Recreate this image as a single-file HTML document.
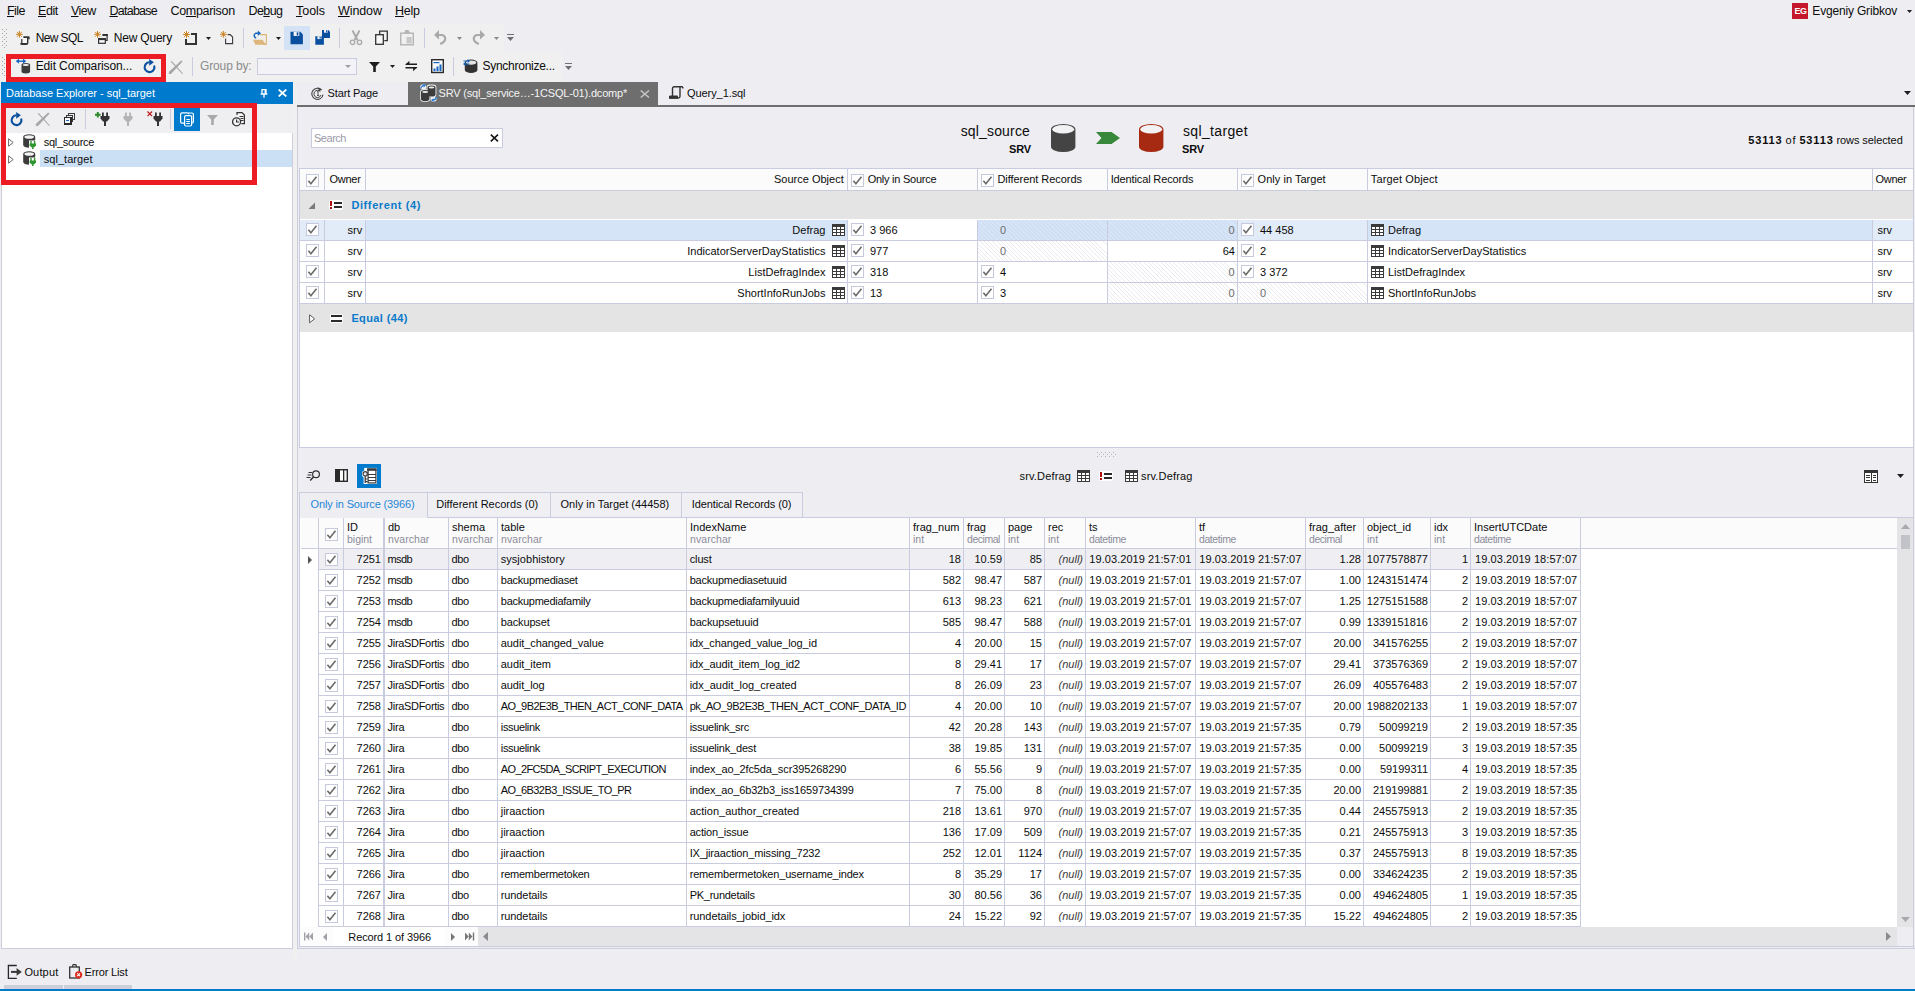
<!DOCTYPE html>
<html lang="en"><head><meta charset="utf-8"><title>dbForge Data Compare</title><style>
html,body{margin:0;padding:0}
body{width:1915px;height:991px;background:#eeeef2;position:relative;overflow:hidden;font-family:"Liberation Sans",sans-serif;font-size:11px;color:#1e1e1e}
body div,body svg{position:absolute}
.t{white-space:pre}
</style></head><body>
<div class="t" style="left:7px;top:4px;font-size:12.5px;line-height:14px;color:#0c0c0c;letter-spacing:-0.539px;"><u>F</u>ile</div>
<div class="t" style="left:38px;top:4px;font-size:12.5px;line-height:14px;color:#0c0c0c;letter-spacing:-0.462px;"><u>E</u>dit</div>
<div class="t" style="left:71px;top:4px;font-size:12.5px;line-height:14px;color:#0c0c0c;letter-spacing:-0.573px;"><u>V</u>iew</div>
<div class="t" style="left:109.5px;top:4px;font-size:12.5px;line-height:14px;color:#0c0c0c;letter-spacing:-0.752px;"><u>D</u>atabase</div>
<div class="t" style="left:170.5px;top:4px;font-size:12.5px;line-height:14px;color:#0c0c0c;letter-spacing:-0.311px;">Co<u>m</u>parison</div>
<div class="t" style="left:248.5px;top:4px;font-size:12.5px;line-height:14px;color:#0c0c0c;letter-spacing:-0.589px;">De<u>b</u>ug</div>
<div class="t" style="left:296px;top:4px;font-size:12.5px;line-height:14px;color:#0c0c0c;letter-spacing:-0.037px;"><u>T</u>ools</div>
<div class="t" style="left:338px;top:4px;font-size:12.5px;line-height:14px;color:#0c0c0c;letter-spacing:-0.097px;"><u>W</u>indow</div>
<div class="t" style="left:395px;top:4px;font-size:12.5px;line-height:14px;color:#0c0c0c;letter-spacing:-0.255px;"><u>H</u>elp</div>
<div style="left:1792px;top:3px;width:16px;height:16px;background:#c4172c;"></div>
<div class="t" style="top:6px;font-size:9px;line-height:10px;color:#fff;font-weight:bold;letter-spacing:-0.508px;left:1794.5px;">EG</div>
<div class="t" style="top:4px;font-size:12px;line-height:14px;color:#0c0c0c;letter-spacing:-0.172px;left:1812.3px;">Evgeniy Gribkov</div>
<svg style="left:1907px;top:10px;" width="5" height="3" viewBox="0 0 5 3"><path d="M0,0 h5 l-2.5,3 z" fill="#1e1e1e"/></svg>
<div style="left:0px;top:24px;width:504px;height:28px;background:#f0f0f0;"></div>
<div style="left:0px;top:52px;width:562px;height:30px;background:#f0f0f0;"></div>
<div style="left:293px;top:82px;width:4px;height:880px;background:#f0f0f0;"></div>
<svg style="left:2px;top:29px;shape-rendering:crispEdges;" width="6" height="20" viewBox="0 0 6 20"><rect x="0" y="0" width="1" height="1" fill="#a4a4ac"/><rect x="2" y="2" width="1" height="1" fill="#a4a4ac"/><rect x="4" y="0" width="1" height="1" fill="#a4a4ac"/><rect x="0" y="4" width="1" height="1" fill="#a4a4ac"/><rect x="2" y="6" width="1" height="1" fill="#a4a4ac"/><rect x="4" y="4" width="1" height="1" fill="#a4a4ac"/><rect x="0" y="8" width="1" height="1" fill="#a4a4ac"/><rect x="2" y="10" width="1" height="1" fill="#a4a4ac"/><rect x="4" y="8" width="1" height="1" fill="#a4a4ac"/><rect x="0" y="12" width="1" height="1" fill="#a4a4ac"/><rect x="2" y="14" width="1" height="1" fill="#a4a4ac"/><rect x="4" y="12" width="1" height="1" fill="#a4a4ac"/><rect x="0" y="16" width="1" height="1" fill="#a4a4ac"/><rect x="2" y="18" width="1" height="1" fill="#a4a4ac"/><rect x="4" y="16" width="1" height="1" fill="#a4a4ac"/></svg>
<svg style="left:15px;top:30px;" width="17" height="16" viewBox="0 0 17 16"><line x1="1.00" y1="4.30" x2="7.80" y2="4.30" stroke="#c8801a" stroke-width="0.95"/><line x1="2.00" y1="1.90" x2="6.80" y2="6.70" stroke="#c8801a" stroke-width="0.95"/><line x1="4.40" y1="0.90" x2="4.40" y2="7.70" stroke="#c8801a" stroke-width="0.95"/><line x1="6.80" y1="1.90" x2="2.00" y2="6.70" stroke="#c8801a" stroke-width="0.95"/><rect x="7.2" y="8" width="5" height="5.4" fill="#f6f6fb"/><path d="M8.4,6.2 h5 a1.3,1.3 0 0 1 1.3,1.3 v1.8 h-1.5 v-1.2 h-4.8 z" fill="#333"/><rect x="12" y="7" width="1.4" height="6.6" fill="#333"/><rect x="6.2" y="9" width="1.2" height="4.3" fill="#333"/><path d="M5.3,13.1 h7.6 v0.6 a1.3,1.3 0 0 1 -1.3,1.3 h-5 a1.3,1.3 0 0 1 -1.3,-1.3 z" fill="#333"/></svg>
<div class="t" style="top:31px;font-size:12px;line-height:14px;color:#0c0c0c;letter-spacing:-0.623px;left:35.7px;">New SQL</div>
<svg style="left:94px;top:30px;" width="16" height="16" viewBox="0 0 16 16"><line x1="0.10" y1="4.30" x2="6.90" y2="4.30" stroke="#c8801a" stroke-width="0.95"/><line x1="1.10" y1="1.90" x2="5.90" y2="6.70" stroke="#c8801a" stroke-width="0.95"/><line x1="3.50" y1="0.90" x2="3.50" y2="7.70" stroke="#c8801a" stroke-width="0.95"/><line x1="5.90" y1="1.90" x2="1.10" y2="6.70" stroke="#c8801a" stroke-width="0.95"/><rect x="8.4" y="4" width="5.3" height="2" fill="#333"/><path d="M13.1,4 v6.4 h-1.6" fill="none" stroke="#333" stroke-width="1.2"/><rect x="4.6" y="8.7" width="6.7" height="4.6" fill="#f6f6fb" stroke="#333" stroke-width="1.2"/><rect x="4" y="8.1" width="7.9" height="2" fill="#333"/></svg>
<div class="t" style="top:31px;font-size:12px;line-height:14px;color:#0c0c0c;letter-spacing:-0.192px;left:113.7px;">New Query</div>
<svg style="left:182px;top:30px;" width="16" height="16" viewBox="0 0 16 16"><rect x="4" y="4" width="10" height="10" fill="none" stroke="#333" stroke-width="2"/><rect x="0" y="0" width="9" height="9" fill="#f0f0f0"/><line x1="1.00" y1="4.50" x2="8.00" y2="4.50" stroke="#c8801a" stroke-width="0.95"/><line x1="2.03" y1="2.03" x2="6.97" y2="6.97" stroke="#c8801a" stroke-width="0.95"/><line x1="4.50" y1="1.00" x2="4.50" y2="8.00" stroke="#c8801a" stroke-width="0.95"/><line x1="6.97" y1="2.03" x2="2.03" y2="6.97" stroke="#c8801a" stroke-width="0.95"/></svg>
<svg style="left:206px;top:37px;" width="5" height="3" viewBox="0 0 5 3"><path d="M0,0 h5 l-2.5,3 z" fill="#1e1e1e"/></svg>
<svg style="left:219px;top:30px;" width="16" height="16" viewBox="0 0 16 16"><path d="M6.6,4.6 h4.6 l2.4,2.4 v6.6 h-7 z" fill="#f4f4f8" stroke="#3a3a3a" stroke-width="1.1"/><rect x="0" y="0" width="8.6" height="8.6" fill="#f0f0f0"/><line x1="1.00" y1="4.30" x2="7.80" y2="4.30" stroke="#c8801a" stroke-width="0.95"/><line x1="2.00" y1="1.90" x2="6.80" y2="6.70" stroke="#c8801a" stroke-width="0.95"/><line x1="4.40" y1="0.90" x2="4.40" y2="7.70" stroke="#c8801a" stroke-width="0.95"/><line x1="6.80" y1="1.90" x2="2.00" y2="6.70" stroke="#c8801a" stroke-width="0.95"/></svg>
<div style="left:243px;top:28px;width:1px;height:20px;background:#c9cbdf;"></div>
<svg style="left:252px;top:30px;" width="16" height="16" viewBox="0 0 16 16"><path d="M8.2,4.6 h6.2 v9.8 h-3" fill="#f1eee8" stroke="#dcb67a" stroke-width="1.1"/><path d="M1,9.8 h9.4 l3.6,5 h-10.6 z" fill="#dcb67a"/><path d="M4.2,8 a2.5,2.5 0 0 1 -0.6,-4.7 h3" fill="none" stroke="#1565c0" stroke-width="1.5"/><path d="M5.8,0.6 l3.2,2.7 l-3.2,2.7 z" fill="#1565c0"/></svg>
<svg style="left:276px;top:37px;" width="5" height="3" viewBox="0 0 5 3"><path d="M0,0 h5 l-2.5,3 z" fill="#1e1e1e"/></svg>
<div style="left:284px;top:26px;width:26px;height:24px;background:#d3e2f4;"></div>
<svg style="left:290px;top:31px;" width="14" height="14" viewBox="0 0 14 14"><path d="M0.5,0.8 h9.816666666666668 l2.5833333333333335,2.5833333333333335 v9.816666666666668 h-12.400000000000002 z" fill="#0b509f"/><rect x="3.6000000000000005" y="0.8" width="5.683333333333334" height="4.133333333333334" fill="#f4f4f8"/><rect x="6.700000000000001" y="1.3166666666666669" width="1.6533333333333335" height="3.1000000000000005" fill="#0b509f"/></svg>
<svg style="left:315px;top:30px;" width="16" height="16" viewBox="0 0 16 16"><path d="M7,0 h6.333333333333333 l1.6666666666666665,1.6666666666666665 v6.333333333333333 h-8.0 z" fill="#0b509f"/><rect x="9.0" y="0" width="3.6666666666666665" height="2.6666666666666665" fill="#f4f4f8"/><rect x="11.0" y="0.3333333333333333" width="1.0666666666666667" height="2.0" fill="#0b509f"/><path d="M0.3,6.2 h6.808333333333334 l1.7916666666666667,1.7916666666666667 v6.808333333333334 h-8.6 z" fill="#0b509f"/><rect x="2.4499999999999997" y="6.2" width="3.941666666666667" height="2.8666666666666667" fill="#f4f4f8"/><rect x="4.6" y="6.558333333333334" width="1.1466666666666667" height="2.15" fill="#0b509f"/></svg>
<div style="left:339px;top:28px;width:1px;height:20px;background:#c9cbdf;"></div>
<svg style="left:349px;top:30px;" width="14" height="16" viewBox="0 0 14 16"><path d="M3.5,0.5 L8.5,10 M10.5,0.5 L5.5,10" stroke="#a9a9a9" stroke-width="1.9" fill="none"/><circle cx="3.5" cy="12.3" r="2.2" fill="none" stroke="#a9a9a9" stroke-width="1.3"/><circle cx="10.5" cy="12.3" r="2.2" fill="none" stroke="#a9a9a9" stroke-width="1.3"/></svg>
<svg style="left:375px;top:30px;" width="14" height="16" viewBox="0 0 14 16"><path d="M4.7,4 v-2.8 h7.6 v9.4 h-3" fill="none" stroke="#333" stroke-width="1.3"/><rect x="0.7" y="4.7" width="7.6" height="9.6" fill="#f8f8f8" stroke="#333" stroke-width="1.3"/></svg>
<svg style="left:400px;top:29px;" width="14" height="17" viewBox="0 0 14 17"><rect x="0.7" y="4.2" width="12.6" height="11.6" fill="none" stroke="#b4b4b4" stroke-width="1.4"/><path d="M4,4 l1.5,-3 h3 l1.5,3 z" fill="#b4b4b4"/><rect x="6.5" y="8" width="5.2" height="6.5" fill="#c8c8c8"/></svg>
<div style="left:424px;top:28px;width:1px;height:20px;background:#c9cbdf;"></div>
<svg style="left:434px;top:30px;" width="13" height="15" viewBox="0 0 13 15"><g ><path d="M1.5,5 h6 a3.7,3.7 0 0 1 3.7,3.7 c0,2.5 -2,4 -5,5.3" fill="none" stroke="#a9a9a9" stroke-width="2.2"/><path d="M0,5 l5,-5 v9.4 z" fill="#a9a9a9"/></g></svg>
<svg style="left:457px;top:37px;" width="5" height="3" viewBox="0 0 5 3"><path d="M0,0 h5 l-2.5,3 z" fill="#8a8a8a"/></svg>
<svg style="left:472px;top:30px;" width="13" height="15" viewBox="0 0 13 15"><g transform="translate(13,0) scale(-1,1)"><path d="M1.5,5 h6 a3.7,3.7 0 0 1 3.7,3.7 c0,2.5 -2,4 -5,5.3" fill="none" stroke="#a9a9a9" stroke-width="2.2"/><path d="M0,5 l5,-5 v9.4 z" fill="#a9a9a9"/></g></svg>
<svg style="left:494px;top:37px;" width="5" height="3" viewBox="0 0 5 3"><path d="M0,0 h5 l-2.5,3 z" fill="#8a8a8a"/></svg>
<svg style="left:507px;top:34px;" width="8" height="8" viewBox="0 0 8 8"><rect x="0" y="0" width="7" height="1" fill="#717171"/><path d="M0,3 h7 l-3.5,4 z" fill="#717171"/></svg>
<svg style="left:2px;top:57px;shape-rendering:crispEdges;" width="6" height="20" viewBox="0 0 6 20"><rect x="0" y="0" width="1" height="1" fill="#a4a4ac"/><rect x="2" y="2" width="1" height="1" fill="#a4a4ac"/><rect x="0" y="4" width="1" height="1" fill="#a4a4ac"/><rect x="2" y="6" width="1" height="1" fill="#a4a4ac"/><rect x="0" y="8" width="1" height="1" fill="#a4a4ac"/><rect x="2" y="10" width="1" height="1" fill="#a4a4ac"/><rect x="0" y="12" width="1" height="1" fill="#a4a4ac"/><rect x="2" y="14" width="1" height="1" fill="#a4a4ac"/><rect x="0" y="16" width="1" height="1" fill="#a4a4ac"/><rect x="2" y="18" width="1" height="1" fill="#a4a4ac"/></svg>
<svg style="left:16px;top:58px;" width="15" height="16" viewBox="0 0 15 16"><path d="M0.5,3.2 h9" stroke="#1565c0" stroke-width="1.4"/><path d="M0,3.2 l3,-2.6 v5.2 z M10,3.2 l-3,-2.6 v5.2 z" fill="#1565c0"/><path d="M5.5,6.8919999999999995 a4.3,1.892 0 0 1 8.6,0 v6.716 a4.3,1.892 0 0 1 -8.6,0 z" fill="#3c3c3c"/><ellipse cx="9.8" cy="6.8919999999999995" rx="3.0999999999999996" ry="0.9919999999999999" fill="#f4f4f4"/></svg>
<div class="t" style="top:59px;font-size:12px;line-height:14px;color:#0c0c0c;letter-spacing:-0.123px;left:35.7px;">Edit Comparison...</div>
<svg style="left:143.3px;top:59px;overflow:visible;" width="15" height="15" viewBox="0 0 15 15"><path d="M11.1,6.5 A4.9,4.9 0 1 1 6.5,3.3" fill="none" stroke="#0b509f" stroke-width="2.1"/><path d="M6.2,-0.1 L10.9,3.3 L6.2,6.7 z" fill="#0b509f"/></svg>
<svg style="left:168px;top:59.5px;" width="16" height="15" viewBox="0 0 16 15"><path d="M13.2,0.6 L14.6,1.6 L3.2,13.8 Q1.6,14.6 0.8,13.4 Q0.4,12.2 1.6,11.2 z" fill="#a6a6a6"/><path d="M2.6,1.6 L3.8,1 L15,13.4 L14.2,14 z" fill="#a6a6a6"/></svg>
<div style="left:192px;top:57px;width:1px;height:19px;background:#c9cbdf;"></div>
<div class="t" style="top:59px;font-size:12px;line-height:14px;color:#8c8c8c;letter-spacing:-0.134px;left:200px;">Group by:</div>
<div style="left:257px;top:58px;width:98px;height:15px;border:1px solid #c9cbdf;background:#f3f3f7;"></div>
<svg style="left:345px;top:65px;" width="6" height="3" viewBox="0 0 6 3"><path d="M0,0 h6 l-3.0,3 z" fill="#a0a0a0"/></svg>
<svg style="left:369px;top:62px;" width="11" height="10" viewBox="0 0 11 10"><path d="M0,0 h11 l-4.2,4.6 v5.4 h-2.6 v-5.4 z" fill="#1e1e1e"/></svg>
<svg style="left:390px;top:65px;" width="5" height="3" viewBox="0 0 5 3"><path d="M0,0 h5 l-2.5,3 z" fill="#1e1e1e"/></svg>
<svg style="left:405px;top:60px;" width="13" height="12" viewBox="0 0 13 12"><path d="M1,4.2 h11 M0.5,7.8 h11" stroke="#1e1e1e" stroke-width="1.5"/><path d="M0,4.9 l4.4,-4.2 v4.2 z M12.5,7.1 l-4.4,4.2 v-4.2 z" fill="#1e1e1e"/></svg>
<svg style="left:430.5px;top:59px;" width="13" height="15" viewBox="0 0 13 15"><rect x="0.7" y="0.7" width="11.6" height="12.8" fill="#fafafa" stroke="#2a2a2a" stroke-width="1.4"/><rect x="2.5" y="3" width="6" height="1.2" fill="#1565c0"/><rect x="2.5" y="9.5" width="2" height="2.7" fill="#1565c0"/><rect x="5.5" y="7.5" width="2" height="4.7" fill="#1565c0"/><rect x="8.5" y="5.5" width="2" height="6.7" fill="#1565c0"/></svg>
<div style="left:453px;top:57px;width:1px;height:19px;background:#c9cbdf;"></div>
<svg style="left:462px;top:58px;" width="16" height="16" viewBox="0 0 16 16"><path d="M2.8,4.6 a6.3,3 0 0 1 12.6,0 v7.4 a6.3,3 0 0 1 -12.6,0 z" fill="#333"/><ellipse cx="9.1" cy="4.6" rx="5.1" ry="2.1" fill="#e4e4e6"/><path d="M1.4,3 h5 M2.4,6 h5" stroke="#1565c0" stroke-width="1.2"/><path d="M5.6,1 l2.4,2 l-2.4,2 z" fill="#1565c0"/><path d="M3.4,4 l-2.4,2 l2.4,2 z" fill="#1565c0"/></svg>
<div class="t" style="top:59px;font-size:12px;line-height:14px;color:#0c0c0c;letter-spacing:-0.268px;left:482.5px;">Synchronize...</div>
<svg style="left:565px;top:63px;" width="8" height="8" viewBox="0 0 8 8"><rect x="0" y="0" width="7" height="1" fill="#717171"/><path d="M0,3 h7 l-3.5,4 z" fill="#717171"/></svg>
<div style="left:6px;top:54px;width:150px;height:18px;border:5px solid #ed1c24;background:transparent;"></div>
<div style="left:1px;top:104px;width:292px;height:845px;background:#fff;"></div>
<div style="left:1px;top:104px;width:290px;height:843px;border:1px solid #cccedb;background:transparent;"></div>
<div style="left:1px;top:104px;width:292px;height:29px;background:#efeff2;"></div>
<div style="left:1px;top:82px;width:292px;height:22px;background:#007acc;"></div>
<div class="t" style="top:87px;font-size:11px;line-height:12px;color:#fff;letter-spacing:-0.006px;left:6px;">Database Explorer - sql_target</div>
<svg style="left:260px;top:89px;" width="8" height="9" viewBox="0 0 8 9"><path d="M2,0.5 h4 v4.5 h-4 z M0.5,5.2 h7 M4,5.2 v3.6" fill="none" stroke="#fff" stroke-width="1.3"/><rect x="4.6" y="0.5" width="1.6" height="4.5" fill="#fff"/></svg>
<svg style="left:278px;top:89px;" width="9" height="8" viewBox="0 0 9 8"><path d="M0.7,0.5 L8.3,7.5 M8.3,0.5 L0.7,7.5" stroke="#fff" stroke-width="1.7" fill="none"/></svg>
<svg style="left:10.3px;top:112px;overflow:visible;" width="15" height="15" viewBox="0 0 15 15"><path d="M11.1,6.5 A4.9,4.9 0 1 1 6.5,3.3" fill="none" stroke="#0b509f" stroke-width="2.1"/><path d="M6.2,-0.1 L10.9,3.3 L6.2,6.7 z" fill="#0b509f"/></svg>
<svg style="left:35px;top:112px;" width="16" height="15" viewBox="0 0 16 15"><path d="M13.2,0.6 L14.6,1.6 L3.2,13.8 Q1.6,14.6 0.8,13.4 Q0.4,12.2 1.6,11.2 z" fill="#a6a6a6"/><path d="M2.6,1.6 L3.8,1 L15,13.4 L14.2,14 z" fill="#a6a6a6"/></svg>
<svg style="left:63px;top:112px;shape-rendering:crispEdges;" width="13" height="13" viewBox="0 0 13 13"><path d="M5.5,3.5 v-2 h6 v6 h-2" fill="none" stroke="#3a3a3a" stroke-width="1"/><path d="M3.5,5.5 v-2 h6 v6 h-2" fill="none" stroke="#3a3a3a" stroke-width="1"/><rect x="1.1" y="5.1" width="6.8" height="6.8" fill="#f8f8fb" stroke="#2a2a2a" stroke-width="1.2"/><rect x="2.8" y="7.8" width="3.4" height="1.4" fill="#1565c0"/></svg>
<div style="left:85px;top:109px;width:1px;height:20px;background:#c9cbdf;"></div>
<svg style="left:94px;top:111px;" width="16" height="15" viewBox="0 0 16 15"><path d="M3.8,1 v5.6 M1,3.8 h5.6" stroke="#2a8a2a" stroke-width="1.9"/><rect x="8.0" y="1.5" width="1.8" height="4" fill="#333"/><rect x="12.2" y="1.5" width="1.8" height="4" fill="#333"/><path d="M6.5,5.0 h9 v2.5 l-2.5,3 h-4 l-2.5,-3 z" fill="#333"/><rect x="10.0" y="10.0" width="2" height="5" fill="#333"/></svg>
<svg style="left:122px;top:111px;" width="12" height="15" viewBox="0 0 12 15"><rect x="3.0" y="1.5" width="1.8" height="4" fill="#b4b4b4"/><rect x="7.2" y="1.5" width="1.8" height="4" fill="#b4b4b4"/><path d="M1.5,5.0 h9 v2.5 l-2.5,3 h-4 l-2.5,-3 z" fill="#b4b4b4"/><rect x="5.0" y="10.0" width="2" height="5" fill="#b4b4b4"/></svg>
<svg style="left:147px;top:111px;" width="16" height="15" viewBox="0 0 16 15"><path d="M0.5,0.5 l4.6,4.6 M5.1,0.5 l-4.6,4.6" stroke="#c01818" stroke-width="1.2"/><rect x="8.0" y="1.5" width="1.8" height="4" fill="#333"/><rect x="12.2" y="1.5" width="1.8" height="4" fill="#333"/><path d="M6.5,5.0 h9 v2.5 l-2.5,3 h-4 l-2.5,-3 z" fill="#333"/><rect x="10.0" y="10.0" width="2" height="5" fill="#333"/></svg>
<div style="left:170px;top:109px;width:1px;height:20px;background:#c9cbdf;"></div>
<div style="left:174px;top:108px;width:26px;height:23px;background:#007acc;"></div>
<svg style="left:180px;top:112px;" width="15" height="15" viewBox="0 0 15 15"><path d="M4.2,11.2 h-2.2 a1.4,1.4 0 0 1 -1.4,-1.4 v-7.6 a1.4,1.4 0 0 1 1.4,-1.4 h5.4 a1.4,1.4 0 0 1 1.4,1.4" fill="none" stroke="#fff" stroke-width="1.2"/><path d="M8.8,1 h3 a1.6,1.6 0 0 1 1.6,1.6 v7 a1.4,1.4 0 0 1 -1.4,1.4" fill="none" stroke="#fff" stroke-width="1.2"/><rect x="4.6" y="3.6" width="7" height="10.4" rx="1.2" fill="#007acc" stroke="#fff" stroke-width="1.2"/><path d="M6.3,7.5 h3.6 M6.3,9.5 h3.6 M6.3,11.5 h3.6" stroke="#fff" stroke-width="1"/></svg>
<svg style="left:207px;top:114.5px;" width="11" height="10" viewBox="0 0 11 10"><path d="M0,0 h11 l-4.2,4.6 v5.4 h-2.6 v-5.4 z" fill="#a9a9a9"/></svg>
<svg style="left:232px;top:112px;" width="15" height="15" viewBox="0 0 15 15"><path d="M5,3 v-2.4 h5 l2.4,2.4 v8.6 h-3" fill="#f8f8f8" stroke="#333" stroke-width="1.2"/><path d="M7.5,4.5 h4 M8.5,6.5 h3 M9,8.5 h2.5" stroke="#333" stroke-width="1"/><circle cx="4.6" cy="9.8" r="4" fill="#f4f4f8" stroke="#333" stroke-width="1.3"/><path d="M4.6,7.4 v2.6 h2.4" fill="none" stroke="#333" stroke-width="1.2"/></svg>
<div style="left:40px;top:150px;width:252px;height:17px;background:#cce0f5;"></div>
<svg style="left:8px;top:138px;" width="6" height="9" viewBox="0 0 6 9"><path d="M0.6,0.8 L5.2,4.5 L0.6,8.2 z" fill="#fff" stroke="#6a6a6a" stroke-width="1"/></svg>
<svg style="left:22px;top:134px;" width="15" height="15" viewBox="0 0 15 15"><path d="M1.2,3.0 a6.0,2.7 0 0 1 12,0 v8.0 a6.0,2.7 0 0 1 -12,0 z" fill="#3c3c3c"/><ellipse cx="7.2" cy="3.0" rx="4.8" ry="1.8000000000000003" fill="#f4f4f4"/><rect x="7" y="6.5" width="8" height="8.5" fill="#fff"/><path d="M9,7 v3 M12.6,7 v3" stroke="#2f962f" stroke-width="1.4"/><path d="M7.6,9.4 h6.4 v1.8 l-1.6,2 h-3.2 l-1.6,-2 z" fill="#2f962f"/><rect x="10.1" y="12.8" width="1.5" height="2.2" fill="#2f962f"/></svg>
<div class="t" style="top:136px;font-size:11px;line-height:12px;color:#0c0c0c;letter-spacing:-0.280px;left:43.7px;">sql_source</div>
<svg style="left:8px;top:155px;" width="6" height="9" viewBox="0 0 6 9"><path d="M0.6,0.8 L5.2,4.5 L0.6,8.2 z" fill="#fff" stroke="#6a6a6a" stroke-width="1"/></svg>
<svg style="left:22px;top:151px;" width="15" height="15" viewBox="0 0 15 15"><path d="M1.2,3.0 a6.0,2.7 0 0 1 12,0 v8.0 a6.0,2.7 0 0 1 -12,0 z" fill="#3c3c3c"/><ellipse cx="7.2" cy="3.0" rx="4.8" ry="1.8000000000000003" fill="#f4f4f4"/><rect x="7" y="6.5" width="8" height="8.5" fill="#fff"/><path d="M9,7 v3 M12.6,7 v3" stroke="#2f962f" stroke-width="1.4"/><path d="M7.6,9.4 h6.4 v1.8 l-1.6,2 h-3.2 l-1.6,-2 z" fill="#2f962f"/><rect x="10.1" y="12.8" width="1.5" height="2.2" fill="#2f962f"/></svg>
<div class="t" style="top:153px;font-size:11px;line-height:12px;color:#0c0c0c;letter-spacing:0.049px;left:43.7px;">sql_target</div>
<div style="left:1px;top:103px;width:246px;height:72px;border:5px solid #ed1c24;background:transparent;"></div>
<div style="left:297px;top:105px;width:1618px;height:2px;background:#6e6e6e;"></div>
<div style="left:408px;top:82px;width:250px;height:24px;background:#6e6e6e;"></div>
<svg style="left:311px;top:87px;" width="13" height="13" viewBox="0 0 13 13"><path d="M10.6,3 A5.6,5.6 0 1 0 12,7.6" fill="none" stroke="#444" stroke-width="1.1"/><path d="M9.3,4.6 A3.6,3.6 0 1 0 10,8" fill="none" stroke="#444" stroke-width="1"/><path d="M7.6,0.4 l3.4,2.4 l-3.6,1.6 z" fill="#444"/><path d="M6,5 l1,-0.6 v4 M6,8.5 h2.2" fill="none" stroke="#444" stroke-width="0.9"/></svg>
<div class="t" style="top:87px;font-size:11px;line-height:12px;color:#0c0c0c;letter-spacing:-0.158px;left:327.6px;">Start Page</div>
<svg style="left:420px;top:84px;" width="17" height="18" viewBox="0 0 17 18"><rect x="6.6" y="0.6" width="9.8" height="12.6" rx="3.2" fill="#f0f0f0"/><rect x="0.2" y="5.2" width="10" height="12.6" rx="3.2" fill="#f0f0f0"/><rect x="0.3" y="0.5" width="6" height="5" rx="2" fill="#f0f0f0"/><rect x="10.5" y="12.6" width="6" height="5" rx="2" fill="#f0f0f0"/><path d="M7.5,3.5 a4.0,2 0 0 1 8,0 v7 a4.0,2 0 0 1 -8,0 z" fill="#3c3c3c"/><ellipse cx="11.5" cy="3.5" rx="2.8" ry="1.1" fill="#f0f0f0"/><path d="M1,8 a4.2,2 0 0 1 8.4,0 v7 a4.2,2 0 0 1 -8.4,0 z" fill="#3c3c3c"/><ellipse cx="5.2" cy="8" rx="3.0" ry="1.1" fill="#f0f0f0"/><path d="M1,4.5 a3,3 0 0 1 3,-3" fill="none" stroke="#2a7bd6" stroke-width="1.3"/><path d="M3.6,-0.2 l2.4,1.8 l-2.4,1.8 z" fill="#2a7bd6"/><path d="M16,13 a3,3 0 0 1 -3,3" fill="none" stroke="#2a7bd6" stroke-width="1.3"/><path d="M13.4,14.2 l-2.4,1.8 l2.4,1.8 z" fill="#2a7bd6"/></svg>
<div class="t" style="top:87px;font-size:11px;line-height:12px;color:#f4f4f4;letter-spacing:-0.186px;left:438.6px;">SRV (sql_service…-1CSQL-01).dcomp*</div>
<svg style="left:640px;top:90px;" width="10" height="8" viewBox="0 0 10 8"><path d="M0.7,0.5 L9,7.5 M9,0.5 L0.7,7.5" stroke="#c4c4c4" stroke-width="1.5" fill="none"/></svg>
<svg style="left:669px;top:86px;" width="15" height="13" viewBox="0 0 15 13"><path d="M3.5,10 v-7.5 a1.8,1.8 0 0 1 1.8,-1.8 h8.5 M13.8,2.6 v-1.6 M11,0.8 v9.5 a1.8,1.8 0 0 1 -1.8,1.8 h-8.8 M0.6,10.3 h8" fill="none" stroke="#333" stroke-width="1.4"/><rect x="0" y="10" width="9" height="2.6" fill="#333"/></svg>
<div class="t" style="top:87px;font-size:11px;line-height:12px;color:#0c0c0c;letter-spacing:-0.074px;left:687px;">Query_1.sql</div>
<svg style="left:1904px;top:91px;" width="7" height="4" viewBox="0 0 7 4"><path d="M0,0 h7 l-3.5,4 z" fill="#1e1e1e"/></svg>
<div style="left:297px;top:107px;width:1px;height:842px;background:#cccedb;"></div>
<div style="left:297px;top:948px;width:1618px;height:1px;background:#cccedb;"></div>
<div style="left:1913px;top:107px;width:1px;height:842px;background:#cccedb;"></div>
<svg style="left:7px;top:964px;" width="16" height="16" viewBox="0 0 16 16"><path d="M9.8,1.5 H1.4 V14.4 H9.8" fill="none" stroke="#2a2a2a" stroke-width="1.3"/><path d="M4,7.9 h8" stroke="#3a3a3a" stroke-width="2"/><path d="M9.6,4 l5.2,3.9 l-5.2,3.9 z" fill="#3a3a3a"/></svg>
<div class="t" style="top:966px;font-size:11px;line-height:12px;color:#0c0c0c;letter-spacing:0.161px;left:24.4px;">Output</div>
<svg style="left:69px;top:964px;" width="14" height="15" viewBox="0 0 14 15"><rect x="0.7" y="3" width="9.6" height="11" fill="none" stroke="#333" stroke-width="1.3"/><path d="M3.2,3 l1,-2.4 h2.6 l1,2.4" fill="none" stroke="#333" stroke-width="1.2"/><circle cx="9.6" cy="10.8" r="3.6" fill="#e0281c"/><path d="M8.2,9.4 l2.8,2.8 M11,9.4 l-2.8,2.8" stroke="#fff" stroke-width="1.1"/></svg>
<div class="t" style="top:966px;font-size:11px;line-height:12px;color:#0c0c0c;letter-spacing:-0.163px;left:84.6px;">Error List</div>
<div style="left:4px;top:985px;width:59px;height:4px;background:#ccced9;"></div>
<div style="left:64px;top:985px;width:68px;height:4px;background:#ccced9;"></div>
<div style="left:0px;top:989px;width:1915px;height:2px;background:#007acc;"></div>
<div style="left:311px;top:128px;width:190px;height:18px;border:1px solid #c9cbdf;background:#fff;"></div>
<div class="t" style="top:132px;font-size:11px;line-height:12px;color:#9a9aa8;letter-spacing:-0.477px;left:314px;">Search</div>
<svg style="left:490px;top:134px;" width="9" height="8" viewBox="0 0 9 8"><path d="M0.8,0.6 L8,7.4 M8,0.6 L0.8,7.4" stroke="#111" stroke-width="1.5" fill="none"/></svg>
<div class="t" style="top:123px;font-size:14px;line-height:16px;color:#0c0c0c;letter-spacing:0.160px;left:960.7px;">sql_source</div>
<div class="t" style="top:143px;font-size:11px;line-height:12px;color:#0c0c0c;font-weight:bold;letter-spacing:-0.141px;left:1009px;">SRV</div>
<svg style="left:1051px;top:124px;" width="25" height="28" viewBox="0 0 25 28"><path d="M0,5.2 a12.2,5.2 0 0 1 24.4,0 v17.6 a12.2,5.2 0 0 1 -24.4,0 z" fill="#444"/><ellipse cx="12.2" cy="5.2" rx="11.0" ry="4.3" fill="#f2f2f4"/></svg>
<svg style="left:1096px;top:132px;" width="24" height="12" viewBox="0 0 24 12"><path d="M0,0 h15.5 l8.5,6 l-8.5,6 h-15.5 l5.5,-6 z" fill="#37883a"/></svg>
<svg style="left:1139px;top:124px;" width="25" height="28" viewBox="0 0 25 28"><path d="M0,5.2 a12.2,5.2 0 0 1 24.4,0 v17.6 a12.2,5.2 0 0 1 -24.4,0 z" fill="#a62a12"/><ellipse cx="12.2" cy="5.2" rx="11.0" ry="4.3" fill="#f2f2f4"/></svg>
<div class="t" style="top:123px;font-size:14px;line-height:16px;color:#0c0c0c;letter-spacing:0.352px;left:1183px;">sql_target</div>
<div class="t" style="top:143px;font-size:11px;line-height:12px;color:#0c0c0c;font-weight:bold;letter-spacing:-0.141px;left:1182px;">SRV</div>
<div class="t" style="top:134px;font-size:11px;line-height:12px;color:#0c0c0c;font-weight:bold;letter-spacing:0.843px;left:1748.3px;">53113</div>
<div class="t" style="top:134px;font-size:11px;line-height:12px;color:#0c0c0c;letter-spacing:0.706px;left:1785.6px;">of</div>
<div class="t" style="top:134px;font-size:11px;line-height:12px;color:#0c0c0c;font-weight:bold;letter-spacing:0.843px;left:1799.4px;">53113</div>
<div class="t" style="top:134px;font-size:11px;line-height:12px;color:#0c0c0c;letter-spacing:-0.074px;left:1836.4px;">rows selected</div>
<div style="left:299px;top:168px;width:1614px;height:280px;background:#fff;"></div>
<div style="left:299px;top:168px;width:1613px;height:278px;border:1px solid #c9cbdf;background:transparent;"></div>
<div style="left:300px;top:169px;width:1613px;height:21px;background:#fbfbfc;"></div>
<div style="left:299px;top:190px;width:1614px;height:1px;background:#c9cbdf;"></div>
<div style="left:324px;top:169px;width:1px;height:21px;background:#c9cbdf;"></div>
<div style="left:365px;top:169px;width:1px;height:21px;background:#c9cbdf;"></div>
<div style="left:847px;top:169px;width:1px;height:21px;background:#c9cbdf;"></div>
<div style="left:977px;top:169px;width:1px;height:21px;background:#c9cbdf;"></div>
<div style="left:1107px;top:169px;width:1px;height:21px;background:#c9cbdf;"></div>
<div style="left:1237px;top:169px;width:1px;height:21px;background:#c9cbdf;"></div>
<div style="left:1367px;top:169px;width:1px;height:21px;background:#c9cbdf;"></div>
<div style="left:1872px;top:169px;width:1px;height:21px;background:#c9cbdf;"></div>
<div style="left:306px;top:174px;width:11px;height:11px;border:1px solid #c6c9dc;background:#fff;"></div>
<svg style="left:306px;top:174px;" width="13" height="13" viewBox="0 0 13 13"><path d="M2.4,6.7 L4.9,9.7 L10.5,2.7" fill="none" stroke="#6a6a6a" stroke-width="1.6"/></svg>
<div class="t" style="top:173px;font-size:11px;line-height:12px;color:#0c0c0c;letter-spacing:-0.281px;left:329.6px;">Owner</div>
<div class="t" style="top:173px;font-size:11px;line-height:12px;color:#0c0c0c;left:243.70000000000005px;width:600px;text-align:right;">Source Object</div>
<div style="left:851px;top:174px;width:11px;height:11px;border:1px solid #c6c9dc;background:#fff;"></div>
<svg style="left:851px;top:174px;" width="13" height="13" viewBox="0 0 13 13"><path d="M2.4,6.7 L4.9,9.7 L10.5,2.7" fill="none" stroke="#6a6a6a" stroke-width="1.6"/></svg>
<div class="t" style="top:173px;font-size:11px;line-height:12px;color:#0c0c0c;letter-spacing:-0.254px;left:867.7px;">Only in Source</div>
<div style="left:981px;top:174px;width:11px;height:11px;border:1px solid #c6c9dc;background:#fff;"></div>
<svg style="left:981px;top:174px;" width="13" height="13" viewBox="0 0 13 13"><path d="M2.4,6.7 L4.9,9.7 L10.5,2.7" fill="none" stroke="#6a6a6a" stroke-width="1.6"/></svg>
<div class="t" style="top:173px;font-size:11px;line-height:12px;color:#0c0c0c;letter-spacing:-0.047px;left:997.4px;">Different Records</div>
<div class="t" style="top:173px;font-size:11px;line-height:12px;color:#0c0c0c;letter-spacing:-0.135px;left:1110.7px;">Identical Records</div>
<div style="left:1241px;top:174px;width:11px;height:11px;border:1px solid #c6c9dc;background:#fff;"></div>
<svg style="left:1241px;top:174px;" width="13" height="13" viewBox="0 0 13 13"><path d="M2.4,6.7 L4.9,9.7 L10.5,2.7" fill="none" stroke="#6a6a6a" stroke-width="1.6"/></svg>
<div class="t" style="top:173px;font-size:11px;line-height:12px;color:#0c0c0c;letter-spacing:0.031px;left:1257.6px;">Only in Target</div>
<div class="t" style="top:173px;font-size:11px;line-height:12px;color:#0c0c0c;letter-spacing:0.114px;left:1370.8px;">Target Object</div>
<div class="t" style="top:173px;font-size:11px;line-height:12px;color:#0c0c0c;letter-spacing:-0.281px;left:1875.5px;">Owner</div>
<div style="left:300px;top:191px;width:1613px;height:28px;background:#e4e4e4;"></div>
<div style="left:300px;top:304px;width:1613px;height:28px;background:#e4e4e4;"></div>
<svg style="left:308px;top:202px;" width="8" height="8" viewBox="0 0 8 8"><path d="M7,0.5 v6.5 h-6.5 z" fill="#7a7a7a"/></svg>
<div style="left:329px;top:200px;width:14px;height:10px;background:rgba(255,255,255,0.85);border-radius:2px;"></div>
<svg style="left:330px;top:201px;shape-rendering:crispEdges;" width="12" height="8" viewBox="0 0 12 8"><rect x="0" y="0" width="2" height="5" fill="#b01010"/><rect x="0" y="6" width="2" height="2" fill="#b01010"/><rect x="4" y="1" width="8" height="2" fill="#2a2a2a"/><rect x="4" y="5" width="8" height="2" fill="#2a2a2a"/></svg>
<div class="t" style="top:199px;font-size:11px;line-height:12px;color:#0a7acb;font-weight:bold;letter-spacing:0.605px;left:351.4px;">Different (4)</div>
<svg style="left:309px;top:314px;" width="7" height="10" viewBox="0 0 7 10"><path d="M0.6,0.8 L5.6,4.8 L0.6,8.8 z" fill="#fff" stroke="#5a5a5a" stroke-width="1"/></svg>
<div style="left:329.5px;top:313.5px;width:13px;height:9px;background:rgba(255,255,255,0.85);border-radius:2px;"></div>
<svg style="left:330.5px;top:315px;shape-rendering:crispEdges;" width="11" height="7" viewBox="0 0 11 7"><rect x="0" y="0" width="11" height="2" fill="#2a2a2a"/><rect x="0" y="4.5" width="11" height="2" fill="#2a2a2a"/></svg>
<div class="t" style="top:312px;font-size:11px;line-height:12px;color:#0a7acb;font-weight:bold;letter-spacing:0.382px;left:351.4px;">Equal (44)</div>
<div style="left:300px;top:220px;width:1613px;height:20px;background:#e2ebf8;"></div>
<div style="left:366px;top:220px;width:481px;height:20px;background:#d6e4f7;"></div>
<div style="left:1368px;top:220px;width:504px;height:20px;background:#d6e4f7;"></div>
<div style="left:848px;top:220px;width:129px;height:20px;background:#fff;"></div>
<div style="left:300px;top:240px;width:1613px;height:1px;background:#c9cbdf;"></div>
<div style="left:306px;top:223px;width:11px;height:11px;border:1px solid #c6c9dc;background:#fff;"></div>
<svg style="left:306px;top:223px;" width="13" height="13" viewBox="0 0 13 13"><path d="M2.4,6.7 L4.9,9.7 L10.5,2.7" fill="none" stroke="#6a6a6a" stroke-width="1.6"/></svg>
<div class="t" style="top:224px;font-size:11px;line-height:12px;color:#0c0c0c;letter-spacing:-0.024px;left:-237.89999999999998px;width:600px;text-align:right;">srv</div>
<div class="t" style="top:224px;font-size:11px;line-height:12px;color:#0c0c0c;left:225.39999999999998px;width:600px;text-align:right;">Defrag</div>
<svg style="left:832px;top:224px;shape-rendering:crispEdges;" width="13" height="12" viewBox="0 0 13 12"><rect x="0" y="0" width="13" height="12" fill="#3a3a3a"/><rect x="1" y="3" width="3" height="2" fill="#fff"/><rect x="5" y="3" width="3" height="2" fill="#fff"/><rect x="9" y="3" width="3" height="2" fill="#fff"/><rect x="1" y="6" width="3" height="2" fill="#fff"/><rect x="5" y="6" width="3" height="2" fill="#fff"/><rect x="9" y="6" width="3" height="2" fill="#fff"/><rect x="1" y="9" width="3" height="2" fill="#fff"/><rect x="5" y="9" width="3" height="2" fill="#fff"/><rect x="9" y="9" width="3" height="2" fill="#fff"/></svg>
<div style="left:851px;top:223px;width:11px;height:11px;border:1px solid #c6c9dc;background:#fff;"></div>
<svg style="left:851px;top:223px;" width="13" height="13" viewBox="0 0 13 13"><path d="M2.4,6.7 L4.9,9.7 L10.5,2.7" fill="none" stroke="#6a6a6a" stroke-width="1.6"/></svg>
<div class="t" style="top:224px;font-size:11px;line-height:12px;color:#0c0c0c;left:870px;">3 966</div>
<div style="left:978px;top:220px;width:129px;height:20px;background:#d6e4f7;background-image:repeating-linear-gradient(45deg,#ccdaef 0,#ccdaef 0.7px,transparent 0.7px,transparent 3px);"></div>
<div class="t" style="top:224px;font-size:11px;line-height:12px;color:#6e6e6e;left:1000px;">0</div>
<div style="left:1108px;top:220px;width:129px;height:20px;background:#d6e4f7;background-image:repeating-linear-gradient(45deg,#ccdaef 0,#ccdaef 0.7px,transparent 0.7px,transparent 3px);"></div>
<div class="t" style="top:224px;font-size:11px;line-height:12px;color:#6e6e6e;left:634.5px;width:600px;text-align:right;">0</div>
<div style="left:1241px;top:223px;width:11px;height:11px;border:1px solid #c6c9dc;background:#fff;"></div>
<svg style="left:1241px;top:223px;" width="13" height="13" viewBox="0 0 13 13"><path d="M2.4,6.7 L4.9,9.7 L10.5,2.7" fill="none" stroke="#6a6a6a" stroke-width="1.6"/></svg>
<div class="t" style="top:224px;font-size:11px;line-height:12px;color:#0c0c0c;left:1260px;">44 458</div>
<svg style="left:1371px;top:224px;shape-rendering:crispEdges;" width="13" height="12" viewBox="0 0 13 12"><rect x="0" y="0" width="13" height="12" fill="#3a3a3a"/><rect x="1" y="3" width="3" height="2" fill="#fff"/><rect x="5" y="3" width="3" height="2" fill="#fff"/><rect x="9" y="3" width="3" height="2" fill="#fff"/><rect x="1" y="6" width="3" height="2" fill="#fff"/><rect x="5" y="6" width="3" height="2" fill="#fff"/><rect x="9" y="6" width="3" height="2" fill="#fff"/><rect x="1" y="9" width="3" height="2" fill="#fff"/><rect x="5" y="9" width="3" height="2" fill="#fff"/><rect x="9" y="9" width="3" height="2" fill="#fff"/></svg>
<div class="t" style="top:224px;font-size:11px;line-height:12px;color:#0c0c0c;left:1388px;">Defrag</div>
<div class="t" style="top:224px;font-size:11px;line-height:12px;color:#0c0c0c;letter-spacing:-0.024px;left:1877.5px;">srv</div>
<div style="left:324px;top:220px;width:1px;height:21px;background:#c9cbdf;"></div>
<div style="left:365px;top:220px;width:1px;height:21px;background:#c9cbdf;"></div>
<div style="left:847px;top:220px;width:1px;height:21px;background:#c9cbdf;"></div>
<div style="left:977px;top:220px;width:1px;height:21px;background:#c9cbdf;"></div>
<div style="left:1107px;top:220px;width:1px;height:21px;background:#c9cbdf;"></div>
<div style="left:1237px;top:220px;width:1px;height:21px;background:#c9cbdf;"></div>
<div style="left:1367px;top:220px;width:1px;height:21px;background:#c9cbdf;"></div>
<div style="left:1872px;top:220px;width:1px;height:21px;background:#c9cbdf;"></div>
<div style="left:300px;top:261px;width:1613px;height:1px;background:#c9cbdf;"></div>
<div style="left:306px;top:244px;width:11px;height:11px;border:1px solid #c6c9dc;background:#fff;"></div>
<svg style="left:306px;top:244px;" width="13" height="13" viewBox="0 0 13 13"><path d="M2.4,6.7 L4.9,9.7 L10.5,2.7" fill="none" stroke="#6a6a6a" stroke-width="1.6"/></svg>
<div class="t" style="top:245px;font-size:11px;line-height:12px;color:#0c0c0c;letter-spacing:-0.024px;left:-237.89999999999998px;width:600px;text-align:right;">srv</div>
<div class="t" style="top:245px;font-size:11px;line-height:12px;color:#0c0c0c;left:225.39999999999998px;width:600px;text-align:right;">IndicatorServerDayStatistics</div>
<svg style="left:832px;top:245px;shape-rendering:crispEdges;" width="13" height="12" viewBox="0 0 13 12"><rect x="0" y="0" width="13" height="12" fill="#3a3a3a"/><rect x="1" y="3" width="3" height="2" fill="#fff"/><rect x="5" y="3" width="3" height="2" fill="#fff"/><rect x="9" y="3" width="3" height="2" fill="#fff"/><rect x="1" y="6" width="3" height="2" fill="#fff"/><rect x="5" y="6" width="3" height="2" fill="#fff"/><rect x="9" y="6" width="3" height="2" fill="#fff"/><rect x="1" y="9" width="3" height="2" fill="#fff"/><rect x="5" y="9" width="3" height="2" fill="#fff"/><rect x="9" y="9" width="3" height="2" fill="#fff"/></svg>
<div style="left:851px;top:244px;width:11px;height:11px;border:1px solid #c6c9dc;background:#fff;"></div>
<svg style="left:851px;top:244px;" width="13" height="13" viewBox="0 0 13 13"><path d="M2.4,6.7 L4.9,9.7 L10.5,2.7" fill="none" stroke="#6a6a6a" stroke-width="1.6"/></svg>
<div class="t" style="top:245px;font-size:11px;line-height:12px;color:#0c0c0c;left:870px;">977</div>
<div style="left:978px;top:241px;width:129px;height:20px;background:#fff;background-image:repeating-linear-gradient(45deg,#ebebef 0,#ebebef 0.7px,transparent 0.7px,transparent 3px);"></div>
<div class="t" style="top:245px;font-size:11px;line-height:12px;color:#6e6e6e;left:1000px;">0</div>
<div class="t" style="top:245px;font-size:11px;line-height:12px;color:#0c0c0c;left:635px;width:600px;text-align:right;">64</div>
<div style="left:1241px;top:244px;width:11px;height:11px;border:1px solid #c6c9dc;background:#fff;"></div>
<svg style="left:1241px;top:244px;" width="13" height="13" viewBox="0 0 13 13"><path d="M2.4,6.7 L4.9,9.7 L10.5,2.7" fill="none" stroke="#6a6a6a" stroke-width="1.6"/></svg>
<div class="t" style="top:245px;font-size:11px;line-height:12px;color:#0c0c0c;left:1260px;">2</div>
<svg style="left:1371px;top:245px;shape-rendering:crispEdges;" width="13" height="12" viewBox="0 0 13 12"><rect x="0" y="0" width="13" height="12" fill="#3a3a3a"/><rect x="1" y="3" width="3" height="2" fill="#fff"/><rect x="5" y="3" width="3" height="2" fill="#fff"/><rect x="9" y="3" width="3" height="2" fill="#fff"/><rect x="1" y="6" width="3" height="2" fill="#fff"/><rect x="5" y="6" width="3" height="2" fill="#fff"/><rect x="9" y="6" width="3" height="2" fill="#fff"/><rect x="1" y="9" width="3" height="2" fill="#fff"/><rect x="5" y="9" width="3" height="2" fill="#fff"/><rect x="9" y="9" width="3" height="2" fill="#fff"/></svg>
<div class="t" style="top:245px;font-size:11px;line-height:12px;color:#0c0c0c;left:1388px;">IndicatorServerDayStatistics</div>
<div class="t" style="top:245px;font-size:11px;line-height:12px;color:#0c0c0c;letter-spacing:-0.024px;left:1877.5px;">srv</div>
<div style="left:324px;top:241px;width:1px;height:21px;background:#c9cbdf;"></div>
<div style="left:365px;top:241px;width:1px;height:21px;background:#c9cbdf;"></div>
<div style="left:847px;top:241px;width:1px;height:21px;background:#c9cbdf;"></div>
<div style="left:977px;top:241px;width:1px;height:21px;background:#c9cbdf;"></div>
<div style="left:1107px;top:241px;width:1px;height:21px;background:#c9cbdf;"></div>
<div style="left:1237px;top:241px;width:1px;height:21px;background:#c9cbdf;"></div>
<div style="left:1367px;top:241px;width:1px;height:21px;background:#c9cbdf;"></div>
<div style="left:1872px;top:241px;width:1px;height:21px;background:#c9cbdf;"></div>
<div style="left:300px;top:282px;width:1613px;height:1px;background:#c9cbdf;"></div>
<div style="left:306px;top:265px;width:11px;height:11px;border:1px solid #c6c9dc;background:#fff;"></div>
<svg style="left:306px;top:265px;" width="13" height="13" viewBox="0 0 13 13"><path d="M2.4,6.7 L4.9,9.7 L10.5,2.7" fill="none" stroke="#6a6a6a" stroke-width="1.6"/></svg>
<div class="t" style="top:266px;font-size:11px;line-height:12px;color:#0c0c0c;letter-spacing:-0.024px;left:-237.89999999999998px;width:600px;text-align:right;">srv</div>
<div class="t" style="top:266px;font-size:11px;line-height:12px;color:#0c0c0c;left:225.39999999999998px;width:600px;text-align:right;">ListDefragIndex</div>
<svg style="left:832px;top:266px;shape-rendering:crispEdges;" width="13" height="12" viewBox="0 0 13 12"><rect x="0" y="0" width="13" height="12" fill="#3a3a3a"/><rect x="1" y="3" width="3" height="2" fill="#fff"/><rect x="5" y="3" width="3" height="2" fill="#fff"/><rect x="9" y="3" width="3" height="2" fill="#fff"/><rect x="1" y="6" width="3" height="2" fill="#fff"/><rect x="5" y="6" width="3" height="2" fill="#fff"/><rect x="9" y="6" width="3" height="2" fill="#fff"/><rect x="1" y="9" width="3" height="2" fill="#fff"/><rect x="5" y="9" width="3" height="2" fill="#fff"/><rect x="9" y="9" width="3" height="2" fill="#fff"/></svg>
<div style="left:851px;top:265px;width:11px;height:11px;border:1px solid #c6c9dc;background:#fff;"></div>
<svg style="left:851px;top:265px;" width="13" height="13" viewBox="0 0 13 13"><path d="M2.4,6.7 L4.9,9.7 L10.5,2.7" fill="none" stroke="#6a6a6a" stroke-width="1.6"/></svg>
<div class="t" style="top:266px;font-size:11px;line-height:12px;color:#0c0c0c;left:870px;">318</div>
<div style="left:981px;top:265px;width:11px;height:11px;border:1px solid #c6c9dc;background:#fff;"></div>
<svg style="left:981px;top:265px;" width="13" height="13" viewBox="0 0 13 13"><path d="M2.4,6.7 L4.9,9.7 L10.5,2.7" fill="none" stroke="#6a6a6a" stroke-width="1.6"/></svg>
<div class="t" style="top:266px;font-size:11px;line-height:12px;color:#0c0c0c;left:1000px;">4</div>
<div style="left:1108px;top:262px;width:129px;height:20px;background:#fff;background-image:repeating-linear-gradient(45deg,#ebebef 0,#ebebef 0.7px,transparent 0.7px,transparent 3px);"></div>
<div class="t" style="top:266px;font-size:11px;line-height:12px;color:#6e6e6e;left:634.5px;width:600px;text-align:right;">0</div>
<div style="left:1241px;top:265px;width:11px;height:11px;border:1px solid #c6c9dc;background:#fff;"></div>
<svg style="left:1241px;top:265px;" width="13" height="13" viewBox="0 0 13 13"><path d="M2.4,6.7 L4.9,9.7 L10.5,2.7" fill="none" stroke="#6a6a6a" stroke-width="1.6"/></svg>
<div class="t" style="top:266px;font-size:11px;line-height:12px;color:#0c0c0c;left:1260px;">3 372</div>
<svg style="left:1371px;top:266px;shape-rendering:crispEdges;" width="13" height="12" viewBox="0 0 13 12"><rect x="0" y="0" width="13" height="12" fill="#3a3a3a"/><rect x="1" y="3" width="3" height="2" fill="#fff"/><rect x="5" y="3" width="3" height="2" fill="#fff"/><rect x="9" y="3" width="3" height="2" fill="#fff"/><rect x="1" y="6" width="3" height="2" fill="#fff"/><rect x="5" y="6" width="3" height="2" fill="#fff"/><rect x="9" y="6" width="3" height="2" fill="#fff"/><rect x="1" y="9" width="3" height="2" fill="#fff"/><rect x="5" y="9" width="3" height="2" fill="#fff"/><rect x="9" y="9" width="3" height="2" fill="#fff"/></svg>
<div class="t" style="top:266px;font-size:11px;line-height:12px;color:#0c0c0c;left:1388px;">ListDefragIndex</div>
<div class="t" style="top:266px;font-size:11px;line-height:12px;color:#0c0c0c;letter-spacing:-0.024px;left:1877.5px;">srv</div>
<div style="left:324px;top:262px;width:1px;height:21px;background:#c9cbdf;"></div>
<div style="left:365px;top:262px;width:1px;height:21px;background:#c9cbdf;"></div>
<div style="left:847px;top:262px;width:1px;height:21px;background:#c9cbdf;"></div>
<div style="left:977px;top:262px;width:1px;height:21px;background:#c9cbdf;"></div>
<div style="left:1107px;top:262px;width:1px;height:21px;background:#c9cbdf;"></div>
<div style="left:1237px;top:262px;width:1px;height:21px;background:#c9cbdf;"></div>
<div style="left:1367px;top:262px;width:1px;height:21px;background:#c9cbdf;"></div>
<div style="left:1872px;top:262px;width:1px;height:21px;background:#c9cbdf;"></div>
<div style="left:300px;top:303px;width:1613px;height:1px;background:#c9cbdf;"></div>
<div style="left:306px;top:286px;width:11px;height:11px;border:1px solid #c6c9dc;background:#fff;"></div>
<svg style="left:306px;top:286px;" width="13" height="13" viewBox="0 0 13 13"><path d="M2.4,6.7 L4.9,9.7 L10.5,2.7" fill="none" stroke="#6a6a6a" stroke-width="1.6"/></svg>
<div class="t" style="top:287px;font-size:11px;line-height:12px;color:#0c0c0c;letter-spacing:-0.024px;left:-237.89999999999998px;width:600px;text-align:right;">srv</div>
<div class="t" style="top:287px;font-size:11px;line-height:12px;color:#0c0c0c;left:225.39999999999998px;width:600px;text-align:right;">ShortInfoRunJobs</div>
<svg style="left:832px;top:287px;shape-rendering:crispEdges;" width="13" height="12" viewBox="0 0 13 12"><rect x="0" y="0" width="13" height="12" fill="#3a3a3a"/><rect x="1" y="3" width="3" height="2" fill="#fff"/><rect x="5" y="3" width="3" height="2" fill="#fff"/><rect x="9" y="3" width="3" height="2" fill="#fff"/><rect x="1" y="6" width="3" height="2" fill="#fff"/><rect x="5" y="6" width="3" height="2" fill="#fff"/><rect x="9" y="6" width="3" height="2" fill="#fff"/><rect x="1" y="9" width="3" height="2" fill="#fff"/><rect x="5" y="9" width="3" height="2" fill="#fff"/><rect x="9" y="9" width="3" height="2" fill="#fff"/></svg>
<div style="left:851px;top:286px;width:11px;height:11px;border:1px solid #c6c9dc;background:#fff;"></div>
<svg style="left:851px;top:286px;" width="13" height="13" viewBox="0 0 13 13"><path d="M2.4,6.7 L4.9,9.7 L10.5,2.7" fill="none" stroke="#6a6a6a" stroke-width="1.6"/></svg>
<div class="t" style="top:287px;font-size:11px;line-height:12px;color:#0c0c0c;left:870px;">13</div>
<div style="left:981px;top:286px;width:11px;height:11px;border:1px solid #c6c9dc;background:#fff;"></div>
<svg style="left:981px;top:286px;" width="13" height="13" viewBox="0 0 13 13"><path d="M2.4,6.7 L4.9,9.7 L10.5,2.7" fill="none" stroke="#6a6a6a" stroke-width="1.6"/></svg>
<div class="t" style="top:287px;font-size:11px;line-height:12px;color:#0c0c0c;left:1000px;">3</div>
<div style="left:1108px;top:283px;width:129px;height:20px;background:#fff;background-image:repeating-linear-gradient(45deg,#ebebef 0,#ebebef 0.7px,transparent 0.7px,transparent 3px);"></div>
<div class="t" style="top:287px;font-size:11px;line-height:12px;color:#6e6e6e;left:634.5px;width:600px;text-align:right;">0</div>
<div style="left:1238px;top:283px;width:129px;height:20px;background:#fff;background-image:repeating-linear-gradient(45deg,#ebebef 0,#ebebef 0.7px,transparent 0.7px,transparent 3px);"></div>
<div class="t" style="top:287px;font-size:11px;line-height:12px;color:#6e6e6e;left:1260px;">0</div>
<svg style="left:1371px;top:287px;shape-rendering:crispEdges;" width="13" height="12" viewBox="0 0 13 12"><rect x="0" y="0" width="13" height="12" fill="#3a3a3a"/><rect x="1" y="3" width="3" height="2" fill="#fff"/><rect x="5" y="3" width="3" height="2" fill="#fff"/><rect x="9" y="3" width="3" height="2" fill="#fff"/><rect x="1" y="6" width="3" height="2" fill="#fff"/><rect x="5" y="6" width="3" height="2" fill="#fff"/><rect x="9" y="6" width="3" height="2" fill="#fff"/><rect x="1" y="9" width="3" height="2" fill="#fff"/><rect x="5" y="9" width="3" height="2" fill="#fff"/><rect x="9" y="9" width="3" height="2" fill="#fff"/></svg>
<div class="t" style="top:287px;font-size:11px;line-height:12px;color:#0c0c0c;left:1388px;">ShortInfoRunJobs</div>
<div class="t" style="top:287px;font-size:11px;line-height:12px;color:#0c0c0c;letter-spacing:-0.024px;left:1877.5px;">srv</div>
<div style="left:324px;top:283px;width:1px;height:21px;background:#c9cbdf;"></div>
<div style="left:365px;top:283px;width:1px;height:21px;background:#c9cbdf;"></div>
<div style="left:847px;top:283px;width:1px;height:21px;background:#c9cbdf;"></div>
<div style="left:977px;top:283px;width:1px;height:21px;background:#c9cbdf;"></div>
<div style="left:1107px;top:283px;width:1px;height:21px;background:#c9cbdf;"></div>
<div style="left:1237px;top:283px;width:1px;height:21px;background:#c9cbdf;"></div>
<div style="left:1367px;top:283px;width:1px;height:21px;background:#c9cbdf;"></div>
<div style="left:1872px;top:283px;width:1px;height:21px;background:#c9cbdf;"></div>
<svg style="left:1097px;top:452px;shape-rendering:crispEdges;" width="20" height="5" viewBox="0 0 20 5"><rect x="0" y="0" width="1" height="1" fill="#b4b4bc"/><rect x="2" y="2" width="1" height="1" fill="#b4b4bc"/><rect x="0" y="4" width="1" height="1" fill="#b4b4bc"/><rect x="4" y="0" width="1" height="1" fill="#b4b4bc"/><rect x="6" y="2" width="1" height="1" fill="#b4b4bc"/><rect x="4" y="4" width="1" height="1" fill="#b4b4bc"/><rect x="8" y="0" width="1" height="1" fill="#b4b4bc"/><rect x="10" y="2" width="1" height="1" fill="#b4b4bc"/><rect x="8" y="4" width="1" height="1" fill="#b4b4bc"/><rect x="12" y="0" width="1" height="1" fill="#b4b4bc"/><rect x="14" y="2" width="1" height="1" fill="#b4b4bc"/><rect x="12" y="4" width="1" height="1" fill="#b4b4bc"/><rect x="16" y="0" width="1" height="1" fill="#b4b4bc"/><rect x="18" y="2" width="1" height="1" fill="#b4b4bc"/><rect x="16" y="4" width="1" height="1" fill="#b4b4bc"/></svg>
<svg style="left:306px;top:470px;" width="15" height="12" viewBox="0 0 15 12"><circle cx="10" cy="4.2" r="3.4" fill="none" stroke="#333" stroke-width="1.2"/><path d="M7.6,6.8 L4.2,10.6" stroke="#333" stroke-width="1.5"/><path d="M2.5,2.5 h3.5 M1.5,5 h4 M0.5,7.5 h4" stroke="#333" stroke-width="1"/></svg>
<svg style="left:335px;top:469px;" width="13" height="13" viewBox="0 0 13 13"><rect x="0.7" y="0.7" width="11.6" height="11.6" fill="#fafafa" stroke="#2a2a2a" stroke-width="1.4"/><rect x="0" y="0" width="5" height="13" fill="#2a2a2a"/><rect x="8" y="0" width="1.3" height="13" fill="#2a2a2a"/></svg>
<div style="left:357px;top:464px;width:24px;height:24px;background:#007acc;"></div>
<svg style="left:362px;top:467px;" width="16" height="18" viewBox="0 0 16 18"><rect x="2.2" y="0.9" width="12.8" height="16" fill="#fff"/><rect x="0" y="3.6" width="6" height="7" rx="3" fill="#fff"/><rect x="1.6" y="9" width="5" height="8" fill="#fff"/><rect x="6.1" y="2.1" width="7.8" height="13.8" fill="#fff" stroke="#3a3a3a" stroke-width="1.2"/><rect x="5" y="1.4" width="9.6" height="2.4" fill="#3a3a3a"/><path d="M6,7.5 h8 M6,10.5 h8 M6,13.5 h8" stroke="#3a3a3a" stroke-width="1"/><circle cx="3.2" cy="6.8" r="2.2" fill="#e8e8e8" stroke="#3a3a3a" stroke-width="1.2"/><path d="M3.2,9 v7 M3.2,12 h2.4 M3.2,14.6 h2.4" fill="none" stroke="#3a3a3a" stroke-width="1.2"/></svg>
<div class="t" style="top:470px;font-size:11px;line-height:12px;color:#0c0c0c;letter-spacing:0.158px;left:1019.5px;">srv.Defrag</div>
<svg style="left:1077px;top:470px;shape-rendering:crispEdges;" width="13" height="12" viewBox="0 0 13 12"><rect x="0" y="0" width="13" height="12" fill="#3a3a3a"/><rect x="1" y="3" width="3" height="2" fill="#fff"/><rect x="5" y="3" width="3" height="2" fill="#fff"/><rect x="9" y="3" width="3" height="2" fill="#fff"/><rect x="1" y="6" width="3" height="2" fill="#fff"/><rect x="5" y="6" width="3" height="2" fill="#fff"/><rect x="9" y="6" width="3" height="2" fill="#fff"/><rect x="1" y="9" width="3" height="2" fill="#fff"/><rect x="5" y="9" width="3" height="2" fill="#fff"/><rect x="9" y="9" width="3" height="2" fill="#fff"/></svg>
<div style="left:1099px;top:471px;width:14px;height:10px;background:rgba(255,255,255,0.85);border-radius:2px;"></div>
<svg style="left:1100px;top:472px;shape-rendering:crispEdges;" width="12" height="8" viewBox="0 0 12 8"><rect x="0" y="0" width="2" height="5" fill="#b01010"/><rect x="0" y="6" width="2" height="2" fill="#b01010"/><rect x="4" y="1" width="8" height="2" fill="#2a2a2a"/><rect x="4" y="5" width="8" height="2" fill="#2a2a2a"/></svg>
<svg style="left:1125px;top:470px;shape-rendering:crispEdges;" width="13" height="12" viewBox="0 0 13 12"><rect x="0" y="0" width="13" height="12" fill="#3a3a3a"/><rect x="1" y="3" width="3" height="2" fill="#fff"/><rect x="5" y="3" width="3" height="2" fill="#fff"/><rect x="9" y="3" width="3" height="2" fill="#fff"/><rect x="1" y="6" width="3" height="2" fill="#fff"/><rect x="5" y="6" width="3" height="2" fill="#fff"/><rect x="9" y="6" width="3" height="2" fill="#fff"/><rect x="1" y="9" width="3" height="2" fill="#fff"/><rect x="5" y="9" width="3" height="2" fill="#fff"/><rect x="9" y="9" width="3" height="2" fill="#fff"/></svg>
<div class="t" style="top:470px;font-size:11px;line-height:12px;color:#0c0c0c;letter-spacing:0.158px;left:1141px;">srv.Defrag</div>
<svg style="left:1864px;top:470px;shape-rendering:crispEdges;" width="14" height="13" viewBox="0 0 14 13"><rect x="0" y="0" width="14" height="13" fill="#333"/><rect x="1" y="3" width="5.5" height="9" fill="#fff"/><rect x="7.5" y="3" width="5.5" height="9" fill="#fff"/><path d="M2,5 h3.5 M2,7.5 h3.5 M2,10 h3.5 M8.5,5 h3.5 M8.5,7.5 h3.5 M8.5,10 h3.5" stroke="#333" stroke-width="1"/></svg>
<svg style="left:1897px;top:474px;" width="7" height="4" viewBox="0 0 7 4"><path d="M0,0 h7 l-3.5,4 z" fill="#1e1e1e"/></svg>
<div style="left:299px;top:492px;width:127px;height:25px;border:1px solid #c9cbdf;background:#eeeef2;border-bottom:none;height:26px;"></div>
<div class="t" style="top:498px;font-size:11px;line-height:12px;color:#1e86d8;letter-spacing:-0.152px;left:310.6px;">Only in Source (3966)</div>
<div style="left:427px;top:492px;width:122px;height:24px;border:1px solid #c9cbdf;background:#f0f0f4;"></div>
<div class="t" style="top:498px;font-size:11px;line-height:12px;color:#0c0c0c;letter-spacing:0.005px;left:436.2px;">Different Records (0)</div>
<div style="left:550px;top:492px;width:130px;height:24px;border:1px solid #c9cbdf;background:#f0f0f4;"></div>
<div class="t" style="top:498px;font-size:11px;line-height:12px;color:#0c0c0c;letter-spacing:0.007px;left:560.5px;">Only in Target (44458)</div>
<div style="left:681px;top:492px;width:120px;height:24px;border:1px solid #c9cbdf;background:#f0f0f4;"></div>
<div class="t" style="top:498px;font-size:11px;line-height:12px;color:#0c0c0c;letter-spacing:-0.086px;left:691.7px;">Identical Records (0)</div>
<div style="left:299px;top:518px;width:1614px;height:409px;background:#fff;"></div>
<div style="left:427px;top:517px;width:1486px;height:1px;background:#c9cbdf;"></div>
<div style="left:299px;top:518px;width:1px;height:429px;background:#c9cbdf;"></div>
<div style="left:301px;top:518px;width:1596px;height:30px;background:#fbfbfc;"></div>
<div style="left:301px;top:548px;width:1596px;height:1px;background:#c9cbdf;"></div>
<div class="t" style="top:521px;font-size:11px;line-height:12px;color:#0c0c0c;left:347px;">ID</div>
<div class="t" style="top:533px;font-size:10.5px;line-height:12px;color:#8c8c9a;letter-spacing:-0.018px;left:347px;">bigint</div>
<div class="t" style="top:521px;font-size:11px;line-height:12px;color:#0c0c0c;left:388px;">db</div>
<div class="t" style="top:533px;font-size:10.5px;line-height:12px;color:#8c8c9a;letter-spacing:0.068px;left:388px;">nvarchar</div>
<div class="t" style="top:521px;font-size:11px;line-height:12px;color:#0c0c0c;left:452px;">shema</div>
<div class="t" style="top:533px;font-size:10.5px;line-height:12px;color:#8c8c9a;letter-spacing:0.068px;left:452px;">nvarchar</div>
<div class="t" style="top:521px;font-size:11px;line-height:12px;color:#0c0c0c;left:501px;">table</div>
<div class="t" style="top:533px;font-size:10.5px;line-height:12px;color:#8c8c9a;letter-spacing:0.068px;left:501px;">nvarchar</div>
<div class="t" style="top:521px;font-size:11px;line-height:12px;color:#0c0c0c;left:690px;">IndexName</div>
<div class="t" style="top:533px;font-size:10.5px;line-height:12px;color:#8c8c9a;letter-spacing:0.068px;left:690px;">nvarchar</div>
<div class="t" style="top:521px;font-size:11px;line-height:12px;color:#0c0c0c;left:913px;">frag_num</div>
<div class="t" style="top:533px;font-size:10.5px;line-height:12px;color:#8c8c9a;left:913px;">int</div>
<div class="t" style="top:521px;font-size:11px;line-height:12px;color:#0c0c0c;left:967px;">frag</div>
<div class="t" style="top:533px;font-size:10.5px;line-height:12px;color:#8c8c9a;letter-spacing:-0.455px;left:967px;">decimal</div>
<div class="t" style="top:521px;font-size:11px;line-height:12px;color:#0c0c0c;left:1008px;">page</div>
<div class="t" style="top:533px;font-size:10.5px;line-height:12px;color:#8c8c9a;left:1008px;">int</div>
<div class="t" style="top:521px;font-size:11px;line-height:12px;color:#0c0c0c;left:1048px;">rec</div>
<div class="t" style="top:533px;font-size:10.5px;line-height:12px;color:#8c8c9a;left:1048px;">int</div>
<div class="t" style="top:521px;font-size:11px;line-height:12px;color:#0c0c0c;left:1089px;">ts</div>
<div class="t" style="top:533px;font-size:10.5px;line-height:12px;color:#8c8c9a;letter-spacing:-0.410px;left:1089px;">datetime</div>
<div class="t" style="top:521px;font-size:11px;line-height:12px;color:#0c0c0c;left:1199px;">tf</div>
<div class="t" style="top:533px;font-size:10.5px;line-height:12px;color:#8c8c9a;letter-spacing:-0.410px;left:1199px;">datetime</div>
<div class="t" style="top:521px;font-size:11px;line-height:12px;color:#0c0c0c;left:1309px;">frag_after</div>
<div class="t" style="top:533px;font-size:10.5px;line-height:12px;color:#8c8c9a;letter-spacing:-0.455px;left:1309px;">decimal</div>
<div class="t" style="top:521px;font-size:11px;line-height:12px;color:#0c0c0c;left:1367px;">object_id</div>
<div class="t" style="top:533px;font-size:10.5px;line-height:12px;color:#8c8c9a;left:1367px;">int</div>
<div class="t" style="top:521px;font-size:11px;line-height:12px;color:#0c0c0c;left:1434px;">idx</div>
<div class="t" style="top:533px;font-size:10.5px;line-height:12px;color:#8c8c9a;left:1434px;">int</div>
<div class="t" style="top:521px;font-size:11px;line-height:12px;color:#0c0c0c;left:1474px;">InsertUTCDate</div>
<div class="t" style="top:533px;font-size:10.5px;line-height:12px;color:#8c8c9a;letter-spacing:-0.410px;left:1474px;">datetime</div>
<div style="left:325px;top:528px;width:11px;height:11px;border:1px solid #c6c9dc;background:#fff;"></div>
<svg style="left:325px;top:528px;" width="13" height="13" viewBox="0 0 13 13"><path d="M2.4,6.7 L4.9,9.7 L10.5,2.7" fill="none" stroke="#6a6a6a" stroke-width="1.6"/></svg>
<div style="left:319px;top:549px;width:1261px;height:20px;background:#efeff3;"></div>
<div style="left:319px;top:569px;width:1262px;height:1px;background:#c9cbdf;"></div>
<div style="left:325px;top:553px;width:11px;height:11px;border:1px solid #c6c9dc;background:#fff;"></div>
<svg style="left:325px;top:553px;" width="13" height="13" viewBox="0 0 13 13"><path d="M2.4,6.7 L4.9,9.7 L10.5,2.7" fill="none" stroke="#6a6a6a" stroke-width="1.6"/></svg>
<div class="t" style="top:553px;font-size:11px;line-height:12px;color:#0c0c0c;left:-219px;width:600px;text-align:right;">7251</div>
<div class="t" style="top:553px;font-size:11px;line-height:12px;color:#0c0c0c;letter-spacing:-0.652px;left:387.6px;">msdb</div>
<div class="t" style="top:553px;font-size:11px;line-height:12px;color:#0c0c0c;letter-spacing:-0.353px;left:451.6px;">dbo</div>
<div class="t" style="top:553px;font-size:11px;line-height:12px;color:#0c0c0c;letter-spacing:0.025px;left:500.8px;">sysjobhistory</div>
<div class="t" style="top:553px;font-size:11px;line-height:12px;color:#0c0c0c;letter-spacing:-0.125px;left:689.7px;">clust</div>
<div class="t" style="top:553px;font-size:11px;line-height:12px;color:#0c0c0c;left:361px;width:600px;text-align:right;">18</div>
<div class="t" style="top:553px;font-size:11px;line-height:12px;color:#0c0c0c;left:402px;width:600px;text-align:right;">10.59</div>
<div class="t" style="top:553px;font-size:11px;line-height:12px;color:#0c0c0c;left:442px;width:600px;text-align:right;">85</div>
<div class="t" style="top:553px;font-size:11px;line-height:12px;color:#3a3a3a;font-style:italic;left:483px;width:600px;text-align:right;">(null)</div>
<div class="t" style="top:553px;font-size:11px;line-height:12px;color:#0c0c0c;letter-spacing:0.061px;left:1089.3px;">19.03.2019 21:57:01</div>
<div class="t" style="top:553px;font-size:11px;line-height:12px;color:#0c0c0c;letter-spacing:0.061px;left:1199.3px;">19.03.2019 21:57:07</div>
<div class="t" style="top:553px;font-size:11px;line-height:12px;color:#0c0c0c;left:761px;width:600px;text-align:right;">1.28</div>
<div class="t" style="top:553px;font-size:11px;line-height:12px;color:#0c0c0c;left:828px;width:600px;text-align:right;">1077578877</div>
<div class="t" style="top:553px;font-size:11px;line-height:12px;color:#0c0c0c;left:868px;width:600px;text-align:right;">1</div>
<div class="t" style="top:553px;font-size:11px;line-height:12px;color:#0c0c0c;letter-spacing:0.072px;left:1475px;">19.03.2019 18:57:07</div>
<div style="left:319px;top:590px;width:1262px;height:1px;background:#c9cbdf;"></div>
<div style="left:325px;top:574px;width:11px;height:11px;border:1px solid #c6c9dc;background:#fff;"></div>
<svg style="left:325px;top:574px;" width="13" height="13" viewBox="0 0 13 13"><path d="M2.4,6.7 L4.9,9.7 L10.5,2.7" fill="none" stroke="#6a6a6a" stroke-width="1.6"/></svg>
<div class="t" style="top:574px;font-size:11px;line-height:12px;color:#0c0c0c;left:-219px;width:600px;text-align:right;">7252</div>
<div class="t" style="top:574px;font-size:11px;line-height:12px;color:#0c0c0c;letter-spacing:-0.652px;left:387.6px;">msdb</div>
<div class="t" style="top:574px;font-size:11px;line-height:12px;color:#0c0c0c;letter-spacing:-0.353px;left:451.6px;">dbo</div>
<div class="t" style="top:574px;font-size:11px;line-height:12px;color:#0c0c0c;letter-spacing:-0.229px;left:500.8px;">backupmediaset</div>
<div class="t" style="top:574px;font-size:11px;line-height:12px;color:#0c0c0c;letter-spacing:-0.223px;left:689.7px;">backupmediasetuuid</div>
<div class="t" style="top:574px;font-size:11px;line-height:12px;color:#0c0c0c;left:361px;width:600px;text-align:right;">582</div>
<div class="t" style="top:574px;font-size:11px;line-height:12px;color:#0c0c0c;left:402px;width:600px;text-align:right;">98.47</div>
<div class="t" style="top:574px;font-size:11px;line-height:12px;color:#0c0c0c;left:442px;width:600px;text-align:right;">587</div>
<div class="t" style="top:574px;font-size:11px;line-height:12px;color:#3a3a3a;font-style:italic;left:483px;width:600px;text-align:right;">(null)</div>
<div class="t" style="top:574px;font-size:11px;line-height:12px;color:#0c0c0c;letter-spacing:0.061px;left:1089.3px;">19.03.2019 21:57:01</div>
<div class="t" style="top:574px;font-size:11px;line-height:12px;color:#0c0c0c;letter-spacing:0.061px;left:1199.3px;">19.03.2019 21:57:07</div>
<div class="t" style="top:574px;font-size:11px;line-height:12px;color:#0c0c0c;left:761px;width:600px;text-align:right;">1.00</div>
<div class="t" style="top:574px;font-size:11px;line-height:12px;color:#0c0c0c;left:828px;width:600px;text-align:right;">1243151474</div>
<div class="t" style="top:574px;font-size:11px;line-height:12px;color:#0c0c0c;left:868px;width:600px;text-align:right;">2</div>
<div class="t" style="top:574px;font-size:11px;line-height:12px;color:#0c0c0c;letter-spacing:0.072px;left:1475px;">19.03.2019 18:57:07</div>
<div style="left:319px;top:611px;width:1262px;height:1px;background:#c9cbdf;"></div>
<div style="left:325px;top:595px;width:11px;height:11px;border:1px solid #c6c9dc;background:#fff;"></div>
<svg style="left:325px;top:595px;" width="13" height="13" viewBox="0 0 13 13"><path d="M2.4,6.7 L4.9,9.7 L10.5,2.7" fill="none" stroke="#6a6a6a" stroke-width="1.6"/></svg>
<div class="t" style="top:595px;font-size:11px;line-height:12px;color:#0c0c0c;left:-219px;width:600px;text-align:right;">7253</div>
<div class="t" style="top:595px;font-size:11px;line-height:12px;color:#0c0c0c;letter-spacing:-0.652px;left:387.6px;">msdb</div>
<div class="t" style="top:595px;font-size:11px;line-height:12px;color:#0c0c0c;letter-spacing:-0.353px;left:451.6px;">dbo</div>
<div class="t" style="top:595px;font-size:11px;line-height:12px;color:#0c0c0c;letter-spacing:-0.268px;left:500.8px;">backupmediafamily</div>
<div class="t" style="top:595px;font-size:11px;line-height:12px;color:#0c0c0c;letter-spacing:-0.255px;left:689.7px;">backupmediafamilyuuid</div>
<div class="t" style="top:595px;font-size:11px;line-height:12px;color:#0c0c0c;left:361px;width:600px;text-align:right;">613</div>
<div class="t" style="top:595px;font-size:11px;line-height:12px;color:#0c0c0c;left:402px;width:600px;text-align:right;">98.23</div>
<div class="t" style="top:595px;font-size:11px;line-height:12px;color:#0c0c0c;left:442px;width:600px;text-align:right;">621</div>
<div class="t" style="top:595px;font-size:11px;line-height:12px;color:#3a3a3a;font-style:italic;left:483px;width:600px;text-align:right;">(null)</div>
<div class="t" style="top:595px;font-size:11px;line-height:12px;color:#0c0c0c;letter-spacing:0.061px;left:1089.3px;">19.03.2019 21:57:01</div>
<div class="t" style="top:595px;font-size:11px;line-height:12px;color:#0c0c0c;letter-spacing:0.061px;left:1199.3px;">19.03.2019 21:57:07</div>
<div class="t" style="top:595px;font-size:11px;line-height:12px;color:#0c0c0c;left:761px;width:600px;text-align:right;">1.25</div>
<div class="t" style="top:595px;font-size:11px;line-height:12px;color:#0c0c0c;left:828px;width:600px;text-align:right;">1275151588</div>
<div class="t" style="top:595px;font-size:11px;line-height:12px;color:#0c0c0c;left:868px;width:600px;text-align:right;">2</div>
<div class="t" style="top:595px;font-size:11px;line-height:12px;color:#0c0c0c;letter-spacing:0.072px;left:1475px;">19.03.2019 18:57:07</div>
<div style="left:319px;top:632px;width:1262px;height:1px;background:#c9cbdf;"></div>
<div style="left:325px;top:616px;width:11px;height:11px;border:1px solid #c6c9dc;background:#fff;"></div>
<svg style="left:325px;top:616px;" width="13" height="13" viewBox="0 0 13 13"><path d="M2.4,6.7 L4.9,9.7 L10.5,2.7" fill="none" stroke="#6a6a6a" stroke-width="1.6"/></svg>
<div class="t" style="top:616px;font-size:11px;line-height:12px;color:#0c0c0c;left:-219px;width:600px;text-align:right;">7254</div>
<div class="t" style="top:616px;font-size:11px;line-height:12px;color:#0c0c0c;letter-spacing:-0.652px;left:387.6px;">msdb</div>
<div class="t" style="top:616px;font-size:11px;line-height:12px;color:#0c0c0c;letter-spacing:-0.353px;left:451.6px;">dbo</div>
<div class="t" style="top:616px;font-size:11px;line-height:12px;color:#0c0c0c;letter-spacing:-0.151px;left:500.8px;">backupset</div>
<div class="t" style="top:616px;font-size:11px;line-height:12px;color:#0c0c0c;letter-spacing:-0.166px;left:689.7px;">backupsetuuid</div>
<div class="t" style="top:616px;font-size:11px;line-height:12px;color:#0c0c0c;left:361px;width:600px;text-align:right;">585</div>
<div class="t" style="top:616px;font-size:11px;line-height:12px;color:#0c0c0c;left:402px;width:600px;text-align:right;">98.47</div>
<div class="t" style="top:616px;font-size:11px;line-height:12px;color:#0c0c0c;left:442px;width:600px;text-align:right;">588</div>
<div class="t" style="top:616px;font-size:11px;line-height:12px;color:#3a3a3a;font-style:italic;left:483px;width:600px;text-align:right;">(null)</div>
<div class="t" style="top:616px;font-size:11px;line-height:12px;color:#0c0c0c;letter-spacing:0.061px;left:1089.3px;">19.03.2019 21:57:01</div>
<div class="t" style="top:616px;font-size:11px;line-height:12px;color:#0c0c0c;letter-spacing:0.061px;left:1199.3px;">19.03.2019 21:57:07</div>
<div class="t" style="top:616px;font-size:11px;line-height:12px;color:#0c0c0c;left:761px;width:600px;text-align:right;">0.99</div>
<div class="t" style="top:616px;font-size:11px;line-height:12px;color:#0c0c0c;left:828px;width:600px;text-align:right;">1339151816</div>
<div class="t" style="top:616px;font-size:11px;line-height:12px;color:#0c0c0c;left:868px;width:600px;text-align:right;">2</div>
<div class="t" style="top:616px;font-size:11px;line-height:12px;color:#0c0c0c;letter-spacing:0.072px;left:1475px;">19.03.2019 18:57:07</div>
<div style="left:319px;top:653px;width:1262px;height:1px;background:#c9cbdf;"></div>
<div style="left:325px;top:637px;width:11px;height:11px;border:1px solid #c6c9dc;background:#fff;"></div>
<svg style="left:325px;top:637px;" width="13" height="13" viewBox="0 0 13 13"><path d="M2.4,6.7 L4.9,9.7 L10.5,2.7" fill="none" stroke="#6a6a6a" stroke-width="1.6"/></svg>
<div class="t" style="top:637px;font-size:11px;line-height:12px;color:#0c0c0c;left:-219px;width:600px;text-align:right;">7255</div>
<div class="t" style="top:637px;font-size:11px;line-height:12px;color:#0c0c0c;letter-spacing:-0.318px;left:387.6px;">JiraSDFortis</div>
<div class="t" style="top:637px;font-size:11px;line-height:12px;color:#0c0c0c;letter-spacing:-0.353px;left:451.6px;">dbo</div>
<div class="t" style="top:637px;font-size:11px;line-height:12px;color:#0c0c0c;letter-spacing:-0.089px;left:500.8px;">audit_changed_value</div>
<div class="t" style="top:637px;font-size:11px;line-height:12px;color:#0c0c0c;letter-spacing:-0.128px;left:689.7px;">idx_changed_value_log_id</div>
<div class="t" style="top:637px;font-size:11px;line-height:12px;color:#0c0c0c;left:361px;width:600px;text-align:right;">4</div>
<div class="t" style="top:637px;font-size:11px;line-height:12px;color:#0c0c0c;left:402px;width:600px;text-align:right;">20.00</div>
<div class="t" style="top:637px;font-size:11px;line-height:12px;color:#0c0c0c;left:442px;width:600px;text-align:right;">15</div>
<div class="t" style="top:637px;font-size:11px;line-height:12px;color:#3a3a3a;font-style:italic;left:483px;width:600px;text-align:right;">(null)</div>
<div class="t" style="top:637px;font-size:11px;line-height:12px;color:#0c0c0c;letter-spacing:0.061px;left:1089.3px;">19.03.2019 21:57:07</div>
<div class="t" style="top:637px;font-size:11px;line-height:12px;color:#0c0c0c;letter-spacing:0.061px;left:1199.3px;">19.03.2019 21:57:07</div>
<div class="t" style="top:637px;font-size:11px;line-height:12px;color:#0c0c0c;left:761px;width:600px;text-align:right;">20.00</div>
<div class="t" style="top:637px;font-size:11px;line-height:12px;color:#0c0c0c;left:828px;width:600px;text-align:right;">341576255</div>
<div class="t" style="top:637px;font-size:11px;line-height:12px;color:#0c0c0c;left:868px;width:600px;text-align:right;">2</div>
<div class="t" style="top:637px;font-size:11px;line-height:12px;color:#0c0c0c;letter-spacing:0.072px;left:1475px;">19.03.2019 18:57:07</div>
<div style="left:319px;top:674px;width:1262px;height:1px;background:#c9cbdf;"></div>
<div style="left:325px;top:658px;width:11px;height:11px;border:1px solid #c6c9dc;background:#fff;"></div>
<svg style="left:325px;top:658px;" width="13" height="13" viewBox="0 0 13 13"><path d="M2.4,6.7 L4.9,9.7 L10.5,2.7" fill="none" stroke="#6a6a6a" stroke-width="1.6"/></svg>
<div class="t" style="top:658px;font-size:11px;line-height:12px;color:#0c0c0c;left:-219px;width:600px;text-align:right;">7256</div>
<div class="t" style="top:658px;font-size:11px;line-height:12px;color:#0c0c0c;letter-spacing:-0.318px;left:387.6px;">JiraSDFortis</div>
<div class="t" style="top:658px;font-size:11px;line-height:12px;color:#0c0c0c;letter-spacing:-0.353px;left:451.6px;">dbo</div>
<div class="t" style="top:658px;font-size:11px;line-height:12px;color:#0c0c0c;letter-spacing:-0.077px;left:500.8px;">audit_item</div>
<div class="t" style="top:658px;font-size:11px;line-height:12px;color:#0c0c0c;letter-spacing:-0.097px;left:689.7px;">idx_audit_item_log_id2</div>
<div class="t" style="top:658px;font-size:11px;line-height:12px;color:#0c0c0c;left:361px;width:600px;text-align:right;">8</div>
<div class="t" style="top:658px;font-size:11px;line-height:12px;color:#0c0c0c;left:402px;width:600px;text-align:right;">29.41</div>
<div class="t" style="top:658px;font-size:11px;line-height:12px;color:#0c0c0c;left:442px;width:600px;text-align:right;">17</div>
<div class="t" style="top:658px;font-size:11px;line-height:12px;color:#3a3a3a;font-style:italic;left:483px;width:600px;text-align:right;">(null)</div>
<div class="t" style="top:658px;font-size:11px;line-height:12px;color:#0c0c0c;letter-spacing:0.061px;left:1089.3px;">19.03.2019 21:57:07</div>
<div class="t" style="top:658px;font-size:11px;line-height:12px;color:#0c0c0c;letter-spacing:0.061px;left:1199.3px;">19.03.2019 21:57:07</div>
<div class="t" style="top:658px;font-size:11px;line-height:12px;color:#0c0c0c;left:761px;width:600px;text-align:right;">29.41</div>
<div class="t" style="top:658px;font-size:11px;line-height:12px;color:#0c0c0c;left:828px;width:600px;text-align:right;">373576369</div>
<div class="t" style="top:658px;font-size:11px;line-height:12px;color:#0c0c0c;left:868px;width:600px;text-align:right;">2</div>
<div class="t" style="top:658px;font-size:11px;line-height:12px;color:#0c0c0c;letter-spacing:0.072px;left:1475px;">19.03.2019 18:57:07</div>
<div style="left:319px;top:695px;width:1262px;height:1px;background:#c9cbdf;"></div>
<div style="left:325px;top:679px;width:11px;height:11px;border:1px solid #c6c9dc;background:#fff;"></div>
<svg style="left:325px;top:679px;" width="13" height="13" viewBox="0 0 13 13"><path d="M2.4,6.7 L4.9,9.7 L10.5,2.7" fill="none" stroke="#6a6a6a" stroke-width="1.6"/></svg>
<div class="t" style="top:679px;font-size:11px;line-height:12px;color:#0c0c0c;left:-219px;width:600px;text-align:right;">7257</div>
<div class="t" style="top:679px;font-size:11px;line-height:12px;color:#0c0c0c;letter-spacing:-0.318px;left:387.6px;">JiraSDFortis</div>
<div class="t" style="top:679px;font-size:11px;line-height:12px;color:#0c0c0c;letter-spacing:-0.353px;left:451.6px;">dbo</div>
<div class="t" style="top:679px;font-size:11px;line-height:12px;color:#0c0c0c;letter-spacing:-0.106px;left:500.8px;">audit_log</div>
<div class="t" style="top:679px;font-size:11px;line-height:12px;color:#0c0c0c;letter-spacing:-0.031px;left:689.7px;">idx_audit_log_created</div>
<div class="t" style="top:679px;font-size:11px;line-height:12px;color:#0c0c0c;left:361px;width:600px;text-align:right;">8</div>
<div class="t" style="top:679px;font-size:11px;line-height:12px;color:#0c0c0c;left:402px;width:600px;text-align:right;">26.09</div>
<div class="t" style="top:679px;font-size:11px;line-height:12px;color:#0c0c0c;left:442px;width:600px;text-align:right;">23</div>
<div class="t" style="top:679px;font-size:11px;line-height:12px;color:#3a3a3a;font-style:italic;left:483px;width:600px;text-align:right;">(null)</div>
<div class="t" style="top:679px;font-size:11px;line-height:12px;color:#0c0c0c;letter-spacing:0.061px;left:1089.3px;">19.03.2019 21:57:07</div>
<div class="t" style="top:679px;font-size:11px;line-height:12px;color:#0c0c0c;letter-spacing:0.061px;left:1199.3px;">19.03.2019 21:57:07</div>
<div class="t" style="top:679px;font-size:11px;line-height:12px;color:#0c0c0c;left:761px;width:600px;text-align:right;">26.09</div>
<div class="t" style="top:679px;font-size:11px;line-height:12px;color:#0c0c0c;left:828px;width:600px;text-align:right;">405576483</div>
<div class="t" style="top:679px;font-size:11px;line-height:12px;color:#0c0c0c;left:868px;width:600px;text-align:right;">2</div>
<div class="t" style="top:679px;font-size:11px;line-height:12px;color:#0c0c0c;letter-spacing:0.072px;left:1475px;">19.03.2019 18:57:07</div>
<div style="left:319px;top:716px;width:1262px;height:1px;background:#c9cbdf;"></div>
<div style="left:325px;top:700px;width:11px;height:11px;border:1px solid #c6c9dc;background:#fff;"></div>
<svg style="left:325px;top:700px;" width="13" height="13" viewBox="0 0 13 13"><path d="M2.4,6.7 L4.9,9.7 L10.5,2.7" fill="none" stroke="#6a6a6a" stroke-width="1.6"/></svg>
<div class="t" style="top:700px;font-size:11px;line-height:12px;color:#0c0c0c;left:-219px;width:600px;text-align:right;">7258</div>
<div class="t" style="top:700px;font-size:11px;line-height:12px;color:#0c0c0c;letter-spacing:-0.318px;left:387.6px;">JiraSDFortis</div>
<div class="t" style="top:700px;font-size:11px;line-height:12px;color:#0c0c0c;letter-spacing:-0.353px;left:451.6px;">dbo</div>
<div class="t" style="top:700px;font-size:11px;line-height:12px;color:#0c0c0c;letter-spacing:-0.566px;left:500.8px;">AO_9B2E3B_THEN_ACT_CONF_DATA</div>
<div class="t" style="top:700px;font-size:11px;line-height:12px;color:#0c0c0c;letter-spacing:-0.480px;left:689.7px;">pk_AO_9B2E3B_THEN_ACT_CONF_DATA_ID</div>
<div class="t" style="top:700px;font-size:11px;line-height:12px;color:#0c0c0c;left:361px;width:600px;text-align:right;">4</div>
<div class="t" style="top:700px;font-size:11px;line-height:12px;color:#0c0c0c;left:402px;width:600px;text-align:right;">20.00</div>
<div class="t" style="top:700px;font-size:11px;line-height:12px;color:#0c0c0c;left:442px;width:600px;text-align:right;">10</div>
<div class="t" style="top:700px;font-size:11px;line-height:12px;color:#3a3a3a;font-style:italic;left:483px;width:600px;text-align:right;">(null)</div>
<div class="t" style="top:700px;font-size:11px;line-height:12px;color:#0c0c0c;letter-spacing:0.061px;left:1089.3px;">19.03.2019 21:57:07</div>
<div class="t" style="top:700px;font-size:11px;line-height:12px;color:#0c0c0c;letter-spacing:0.061px;left:1199.3px;">19.03.2019 21:57:07</div>
<div class="t" style="top:700px;font-size:11px;line-height:12px;color:#0c0c0c;left:761px;width:600px;text-align:right;">20.00</div>
<div class="t" style="top:700px;font-size:11px;line-height:12px;color:#0c0c0c;left:828px;width:600px;text-align:right;">1988202133</div>
<div class="t" style="top:700px;font-size:11px;line-height:12px;color:#0c0c0c;left:868px;width:600px;text-align:right;">1</div>
<div class="t" style="top:700px;font-size:11px;line-height:12px;color:#0c0c0c;letter-spacing:0.072px;left:1475px;">19.03.2019 18:57:07</div>
<div style="left:319px;top:737px;width:1262px;height:1px;background:#c9cbdf;"></div>
<div style="left:325px;top:721px;width:11px;height:11px;border:1px solid #c6c9dc;background:#fff;"></div>
<svg style="left:325px;top:721px;" width="13" height="13" viewBox="0 0 13 13"><path d="M2.4,6.7 L4.9,9.7 L10.5,2.7" fill="none" stroke="#6a6a6a" stroke-width="1.6"/></svg>
<div class="t" style="top:721px;font-size:11px;line-height:12px;color:#0c0c0c;left:-219px;width:600px;text-align:right;">7259</div>
<div class="t" style="top:721px;font-size:11px;line-height:12px;color:#0c0c0c;letter-spacing:-0.234px;left:387.6px;">Jira</div>
<div class="t" style="top:721px;font-size:11px;line-height:12px;color:#0c0c0c;letter-spacing:-0.353px;left:451.6px;">dbo</div>
<div class="t" style="top:721px;font-size:11px;line-height:12px;color:#0c0c0c;letter-spacing:-0.343px;left:500.8px;">issuelink</div>
<div class="t" style="top:721px;font-size:11px;line-height:12px;color:#0c0c0c;letter-spacing:-0.290px;left:689.7px;">issuelink_src</div>
<div class="t" style="top:721px;font-size:11px;line-height:12px;color:#0c0c0c;left:361px;width:600px;text-align:right;">42</div>
<div class="t" style="top:721px;font-size:11px;line-height:12px;color:#0c0c0c;left:402px;width:600px;text-align:right;">20.28</div>
<div class="t" style="top:721px;font-size:11px;line-height:12px;color:#0c0c0c;left:442px;width:600px;text-align:right;">143</div>
<div class="t" style="top:721px;font-size:11px;line-height:12px;color:#3a3a3a;font-style:italic;left:483px;width:600px;text-align:right;">(null)</div>
<div class="t" style="top:721px;font-size:11px;line-height:12px;color:#0c0c0c;letter-spacing:0.061px;left:1089.3px;">19.03.2019 21:57:07</div>
<div class="t" style="top:721px;font-size:11px;line-height:12px;color:#0c0c0c;letter-spacing:0.061px;left:1199.3px;">19.03.2019 21:57:35</div>
<div class="t" style="top:721px;font-size:11px;line-height:12px;color:#0c0c0c;left:761px;width:600px;text-align:right;">0.79</div>
<div class="t" style="top:721px;font-size:11px;line-height:12px;color:#0c0c0c;left:828px;width:600px;text-align:right;">50099219</div>
<div class="t" style="top:721px;font-size:11px;line-height:12px;color:#0c0c0c;left:868px;width:600px;text-align:right;">2</div>
<div class="t" style="top:721px;font-size:11px;line-height:12px;color:#0c0c0c;letter-spacing:0.072px;left:1475px;">19.03.2019 18:57:35</div>
<div style="left:319px;top:758px;width:1262px;height:1px;background:#c9cbdf;"></div>
<div style="left:325px;top:742px;width:11px;height:11px;border:1px solid #c6c9dc;background:#fff;"></div>
<svg style="left:325px;top:742px;" width="13" height="13" viewBox="0 0 13 13"><path d="M2.4,6.7 L4.9,9.7 L10.5,2.7" fill="none" stroke="#6a6a6a" stroke-width="1.6"/></svg>
<div class="t" style="top:742px;font-size:11px;line-height:12px;color:#0c0c0c;left:-219px;width:600px;text-align:right;">7260</div>
<div class="t" style="top:742px;font-size:11px;line-height:12px;color:#0c0c0c;letter-spacing:-0.234px;left:387.6px;">Jira</div>
<div class="t" style="top:742px;font-size:11px;line-height:12px;color:#0c0c0c;letter-spacing:-0.353px;left:451.6px;">dbo</div>
<div class="t" style="top:742px;font-size:11px;line-height:12px;color:#0c0c0c;letter-spacing:-0.343px;left:500.8px;">issuelink</div>
<div class="t" style="top:742px;font-size:11px;line-height:12px;color:#0c0c0c;letter-spacing:-0.200px;left:689.7px;">issuelink_dest</div>
<div class="t" style="top:742px;font-size:11px;line-height:12px;color:#0c0c0c;left:361px;width:600px;text-align:right;">38</div>
<div class="t" style="top:742px;font-size:11px;line-height:12px;color:#0c0c0c;left:402px;width:600px;text-align:right;">19.85</div>
<div class="t" style="top:742px;font-size:11px;line-height:12px;color:#0c0c0c;left:442px;width:600px;text-align:right;">131</div>
<div class="t" style="top:742px;font-size:11px;line-height:12px;color:#3a3a3a;font-style:italic;left:483px;width:600px;text-align:right;">(null)</div>
<div class="t" style="top:742px;font-size:11px;line-height:12px;color:#0c0c0c;letter-spacing:0.061px;left:1089.3px;">19.03.2019 21:57:07</div>
<div class="t" style="top:742px;font-size:11px;line-height:12px;color:#0c0c0c;letter-spacing:0.061px;left:1199.3px;">19.03.2019 21:57:35</div>
<div class="t" style="top:742px;font-size:11px;line-height:12px;color:#0c0c0c;left:761px;width:600px;text-align:right;">0.00</div>
<div class="t" style="top:742px;font-size:11px;line-height:12px;color:#0c0c0c;left:828px;width:600px;text-align:right;">50099219</div>
<div class="t" style="top:742px;font-size:11px;line-height:12px;color:#0c0c0c;left:868px;width:600px;text-align:right;">3</div>
<div class="t" style="top:742px;font-size:11px;line-height:12px;color:#0c0c0c;letter-spacing:0.072px;left:1475px;">19.03.2019 18:57:35</div>
<div style="left:319px;top:779px;width:1262px;height:1px;background:#c9cbdf;"></div>
<div style="left:325px;top:763px;width:11px;height:11px;border:1px solid #c6c9dc;background:#fff;"></div>
<svg style="left:325px;top:763px;" width="13" height="13" viewBox="0 0 13 13"><path d="M2.4,6.7 L4.9,9.7 L10.5,2.7" fill="none" stroke="#6a6a6a" stroke-width="1.6"/></svg>
<div class="t" style="top:763px;font-size:11px;line-height:12px;color:#0c0c0c;left:-219px;width:600px;text-align:right;">7261</div>
<div class="t" style="top:763px;font-size:11px;line-height:12px;color:#0c0c0c;letter-spacing:-0.234px;left:387.6px;">Jira</div>
<div class="t" style="top:763px;font-size:11px;line-height:12px;color:#0c0c0c;letter-spacing:-0.353px;left:451.6px;">dbo</div>
<div class="t" style="top:763px;font-size:11px;line-height:12px;color:#0c0c0c;letter-spacing:-0.613px;left:500.8px;">AO_2FC5DA_SCRIPT_EXECUTION</div>
<div class="t" style="top:763px;font-size:11px;line-height:12px;color:#0c0c0c;letter-spacing:-0.109px;left:689.7px;">index_ao_2fc5da_scr395268290</div>
<div class="t" style="top:763px;font-size:11px;line-height:12px;color:#0c0c0c;left:361px;width:600px;text-align:right;">6</div>
<div class="t" style="top:763px;font-size:11px;line-height:12px;color:#0c0c0c;left:402px;width:600px;text-align:right;">55.56</div>
<div class="t" style="top:763px;font-size:11px;line-height:12px;color:#0c0c0c;left:442px;width:600px;text-align:right;">9</div>
<div class="t" style="top:763px;font-size:11px;line-height:12px;color:#3a3a3a;font-style:italic;left:483px;width:600px;text-align:right;">(null)</div>
<div class="t" style="top:763px;font-size:11px;line-height:12px;color:#0c0c0c;letter-spacing:0.061px;left:1089.3px;">19.03.2019 21:57:07</div>
<div class="t" style="top:763px;font-size:11px;line-height:12px;color:#0c0c0c;letter-spacing:0.061px;left:1199.3px;">19.03.2019 21:57:35</div>
<div class="t" style="top:763px;font-size:11px;line-height:12px;color:#0c0c0c;left:761px;width:600px;text-align:right;">0.00</div>
<div class="t" style="top:763px;font-size:11px;line-height:12px;color:#0c0c0c;left:828px;width:600px;text-align:right;">59199311</div>
<div class="t" style="top:763px;font-size:11px;line-height:12px;color:#0c0c0c;left:868px;width:600px;text-align:right;">4</div>
<div class="t" style="top:763px;font-size:11px;line-height:12px;color:#0c0c0c;letter-spacing:0.072px;left:1475px;">19.03.2019 18:57:35</div>
<div style="left:319px;top:800px;width:1262px;height:1px;background:#c9cbdf;"></div>
<div style="left:325px;top:784px;width:11px;height:11px;border:1px solid #c6c9dc;background:#fff;"></div>
<svg style="left:325px;top:784px;" width="13" height="13" viewBox="0 0 13 13"><path d="M2.4,6.7 L4.9,9.7 L10.5,2.7" fill="none" stroke="#6a6a6a" stroke-width="1.6"/></svg>
<div class="t" style="top:784px;font-size:11px;line-height:12px;color:#0c0c0c;left:-219px;width:600px;text-align:right;">7262</div>
<div class="t" style="top:784px;font-size:11px;line-height:12px;color:#0c0c0c;letter-spacing:-0.234px;left:387.6px;">Jira</div>
<div class="t" style="top:784px;font-size:11px;line-height:12px;color:#0c0c0c;letter-spacing:-0.353px;left:451.6px;">dbo</div>
<div class="t" style="top:784px;font-size:11px;line-height:12px;color:#0c0c0c;letter-spacing:-0.585px;left:500.8px;">AO_6B32B3_ISSUE_TO_PR</div>
<div class="t" style="top:784px;font-size:11px;line-height:12px;color:#0c0c0c;letter-spacing:-0.142px;left:689.7px;">index_ao_6b32b3_iss1659734399</div>
<div class="t" style="top:784px;font-size:11px;line-height:12px;color:#0c0c0c;left:361px;width:600px;text-align:right;">7</div>
<div class="t" style="top:784px;font-size:11px;line-height:12px;color:#0c0c0c;left:402px;width:600px;text-align:right;">75.00</div>
<div class="t" style="top:784px;font-size:11px;line-height:12px;color:#0c0c0c;left:442px;width:600px;text-align:right;">8</div>
<div class="t" style="top:784px;font-size:11px;line-height:12px;color:#3a3a3a;font-style:italic;left:483px;width:600px;text-align:right;">(null)</div>
<div class="t" style="top:784px;font-size:11px;line-height:12px;color:#0c0c0c;letter-spacing:0.061px;left:1089.3px;">19.03.2019 21:57:07</div>
<div class="t" style="top:784px;font-size:11px;line-height:12px;color:#0c0c0c;letter-spacing:0.061px;left:1199.3px;">19.03.2019 21:57:35</div>
<div class="t" style="top:784px;font-size:11px;line-height:12px;color:#0c0c0c;left:761px;width:600px;text-align:right;">20.00</div>
<div class="t" style="top:784px;font-size:11px;line-height:12px;color:#0c0c0c;left:828px;width:600px;text-align:right;">219199881</div>
<div class="t" style="top:784px;font-size:11px;line-height:12px;color:#0c0c0c;left:868px;width:600px;text-align:right;">2</div>
<div class="t" style="top:784px;font-size:11px;line-height:12px;color:#0c0c0c;letter-spacing:0.072px;left:1475px;">19.03.2019 18:57:35</div>
<div style="left:319px;top:821px;width:1262px;height:1px;background:#c9cbdf;"></div>
<div style="left:325px;top:805px;width:11px;height:11px;border:1px solid #c6c9dc;background:#fff;"></div>
<svg style="left:325px;top:805px;" width="13" height="13" viewBox="0 0 13 13"><path d="M2.4,6.7 L4.9,9.7 L10.5,2.7" fill="none" stroke="#6a6a6a" stroke-width="1.6"/></svg>
<div class="t" style="top:805px;font-size:11px;line-height:12px;color:#0c0c0c;left:-219px;width:600px;text-align:right;">7263</div>
<div class="t" style="top:805px;font-size:11px;line-height:12px;color:#0c0c0c;letter-spacing:-0.234px;left:387.6px;">Jira</div>
<div class="t" style="top:805px;font-size:11px;line-height:12px;color:#0c0c0c;letter-spacing:-0.353px;left:451.6px;">dbo</div>
<div class="t" style="top:805px;font-size:11px;line-height:12px;color:#0c0c0c;letter-spacing:-0.033px;left:500.8px;">jiraaction</div>
<div class="t" style="top:805px;font-size:11px;line-height:12px;color:#0c0c0c;letter-spacing:0.001px;left:689.7px;">action_author_created</div>
<div class="t" style="top:805px;font-size:11px;line-height:12px;color:#0c0c0c;left:361px;width:600px;text-align:right;">218</div>
<div class="t" style="top:805px;font-size:11px;line-height:12px;color:#0c0c0c;left:402px;width:600px;text-align:right;">13.61</div>
<div class="t" style="top:805px;font-size:11px;line-height:12px;color:#0c0c0c;left:442px;width:600px;text-align:right;">970</div>
<div class="t" style="top:805px;font-size:11px;line-height:12px;color:#3a3a3a;font-style:italic;left:483px;width:600px;text-align:right;">(null)</div>
<div class="t" style="top:805px;font-size:11px;line-height:12px;color:#0c0c0c;letter-spacing:0.061px;left:1089.3px;">19.03.2019 21:57:07</div>
<div class="t" style="top:805px;font-size:11px;line-height:12px;color:#0c0c0c;letter-spacing:0.061px;left:1199.3px;">19.03.2019 21:57:35</div>
<div class="t" style="top:805px;font-size:11px;line-height:12px;color:#0c0c0c;left:761px;width:600px;text-align:right;">0.44</div>
<div class="t" style="top:805px;font-size:11px;line-height:12px;color:#0c0c0c;left:828px;width:600px;text-align:right;">245575913</div>
<div class="t" style="top:805px;font-size:11px;line-height:12px;color:#0c0c0c;left:868px;width:600px;text-align:right;">2</div>
<div class="t" style="top:805px;font-size:11px;line-height:12px;color:#0c0c0c;letter-spacing:0.072px;left:1475px;">19.03.2019 18:57:35</div>
<div style="left:319px;top:842px;width:1262px;height:1px;background:#c9cbdf;"></div>
<div style="left:325px;top:826px;width:11px;height:11px;border:1px solid #c6c9dc;background:#fff;"></div>
<svg style="left:325px;top:826px;" width="13" height="13" viewBox="0 0 13 13"><path d="M2.4,6.7 L4.9,9.7 L10.5,2.7" fill="none" stroke="#6a6a6a" stroke-width="1.6"/></svg>
<div class="t" style="top:826px;font-size:11px;line-height:12px;color:#0c0c0c;left:-219px;width:600px;text-align:right;">7264</div>
<div class="t" style="top:826px;font-size:11px;line-height:12px;color:#0c0c0c;letter-spacing:-0.234px;left:387.6px;">Jira</div>
<div class="t" style="top:826px;font-size:11px;line-height:12px;color:#0c0c0c;letter-spacing:-0.353px;left:451.6px;">dbo</div>
<div class="t" style="top:826px;font-size:11px;line-height:12px;color:#0c0c0c;letter-spacing:-0.033px;left:500.8px;">jiraaction</div>
<div class="t" style="top:826px;font-size:11px;line-height:12px;color:#0c0c0c;letter-spacing:-0.205px;left:689.7px;">action_issue</div>
<div class="t" style="top:826px;font-size:11px;line-height:12px;color:#0c0c0c;left:361px;width:600px;text-align:right;">136</div>
<div class="t" style="top:826px;font-size:11px;line-height:12px;color:#0c0c0c;left:402px;width:600px;text-align:right;">17.09</div>
<div class="t" style="top:826px;font-size:11px;line-height:12px;color:#0c0c0c;left:442px;width:600px;text-align:right;">509</div>
<div class="t" style="top:826px;font-size:11px;line-height:12px;color:#3a3a3a;font-style:italic;left:483px;width:600px;text-align:right;">(null)</div>
<div class="t" style="top:826px;font-size:11px;line-height:12px;color:#0c0c0c;letter-spacing:0.061px;left:1089.3px;">19.03.2019 21:57:07</div>
<div class="t" style="top:826px;font-size:11px;line-height:12px;color:#0c0c0c;letter-spacing:0.061px;left:1199.3px;">19.03.2019 21:57:35</div>
<div class="t" style="top:826px;font-size:11px;line-height:12px;color:#0c0c0c;left:761px;width:600px;text-align:right;">0.21</div>
<div class="t" style="top:826px;font-size:11px;line-height:12px;color:#0c0c0c;left:828px;width:600px;text-align:right;">245575913</div>
<div class="t" style="top:826px;font-size:11px;line-height:12px;color:#0c0c0c;left:868px;width:600px;text-align:right;">3</div>
<div class="t" style="top:826px;font-size:11px;line-height:12px;color:#0c0c0c;letter-spacing:0.072px;left:1475px;">19.03.2019 18:57:35</div>
<div style="left:319px;top:863px;width:1262px;height:1px;background:#c9cbdf;"></div>
<div style="left:325px;top:847px;width:11px;height:11px;border:1px solid #c6c9dc;background:#fff;"></div>
<svg style="left:325px;top:847px;" width="13" height="13" viewBox="0 0 13 13"><path d="M2.4,6.7 L4.9,9.7 L10.5,2.7" fill="none" stroke="#6a6a6a" stroke-width="1.6"/></svg>
<div class="t" style="top:847px;font-size:11px;line-height:12px;color:#0c0c0c;left:-219px;width:600px;text-align:right;">7265</div>
<div class="t" style="top:847px;font-size:11px;line-height:12px;color:#0c0c0c;letter-spacing:-0.234px;left:387.6px;">Jira</div>
<div class="t" style="top:847px;font-size:11px;line-height:12px;color:#0c0c0c;letter-spacing:-0.353px;left:451.6px;">dbo</div>
<div class="t" style="top:847px;font-size:11px;line-height:12px;color:#0c0c0c;letter-spacing:-0.033px;left:500.8px;">jiraaction</div>
<div class="t" style="top:847px;font-size:11px;line-height:12px;color:#0c0c0c;letter-spacing:-0.151px;left:689.7px;">IX_jiraaction_missing_7232</div>
<div class="t" style="top:847px;font-size:11px;line-height:12px;color:#0c0c0c;left:361px;width:600px;text-align:right;">252</div>
<div class="t" style="top:847px;font-size:11px;line-height:12px;color:#0c0c0c;left:402px;width:600px;text-align:right;">12.01</div>
<div class="t" style="top:847px;font-size:11px;line-height:12px;color:#0c0c0c;left:442px;width:600px;text-align:right;">1124</div>
<div class="t" style="top:847px;font-size:11px;line-height:12px;color:#3a3a3a;font-style:italic;left:483px;width:600px;text-align:right;">(null)</div>
<div class="t" style="top:847px;font-size:11px;line-height:12px;color:#0c0c0c;letter-spacing:0.061px;left:1089.3px;">19.03.2019 21:57:07</div>
<div class="t" style="top:847px;font-size:11px;line-height:12px;color:#0c0c0c;letter-spacing:0.061px;left:1199.3px;">19.03.2019 21:57:35</div>
<div class="t" style="top:847px;font-size:11px;line-height:12px;color:#0c0c0c;left:761px;width:600px;text-align:right;">0.37</div>
<div class="t" style="top:847px;font-size:11px;line-height:12px;color:#0c0c0c;left:828px;width:600px;text-align:right;">245575913</div>
<div class="t" style="top:847px;font-size:11px;line-height:12px;color:#0c0c0c;left:868px;width:600px;text-align:right;">8</div>
<div class="t" style="top:847px;font-size:11px;line-height:12px;color:#0c0c0c;letter-spacing:0.072px;left:1475px;">19.03.2019 18:57:35</div>
<div style="left:319px;top:884px;width:1262px;height:1px;background:#c9cbdf;"></div>
<div style="left:325px;top:868px;width:11px;height:11px;border:1px solid #c6c9dc;background:#fff;"></div>
<svg style="left:325px;top:868px;" width="13" height="13" viewBox="0 0 13 13"><path d="M2.4,6.7 L4.9,9.7 L10.5,2.7" fill="none" stroke="#6a6a6a" stroke-width="1.6"/></svg>
<div class="t" style="top:868px;font-size:11px;line-height:12px;color:#0c0c0c;left:-219px;width:600px;text-align:right;">7266</div>
<div class="t" style="top:868px;font-size:11px;line-height:12px;color:#0c0c0c;letter-spacing:-0.234px;left:387.6px;">Jira</div>
<div class="t" style="top:868px;font-size:11px;line-height:12px;color:#0c0c0c;letter-spacing:-0.353px;left:451.6px;">dbo</div>
<div class="t" style="top:868px;font-size:11px;line-height:12px;color:#0c0c0c;letter-spacing:-0.249px;left:500.8px;">remembermetoken</div>
<div class="t" style="top:868px;font-size:11px;line-height:12px;color:#0c0c0c;letter-spacing:-0.186px;left:689.7px;">remembermetoken_username_index</div>
<div class="t" style="top:868px;font-size:11px;line-height:12px;color:#0c0c0c;left:361px;width:600px;text-align:right;">8</div>
<div class="t" style="top:868px;font-size:11px;line-height:12px;color:#0c0c0c;left:402px;width:600px;text-align:right;">35.29</div>
<div class="t" style="top:868px;font-size:11px;line-height:12px;color:#0c0c0c;left:442px;width:600px;text-align:right;">17</div>
<div class="t" style="top:868px;font-size:11px;line-height:12px;color:#3a3a3a;font-style:italic;left:483px;width:600px;text-align:right;">(null)</div>
<div class="t" style="top:868px;font-size:11px;line-height:12px;color:#0c0c0c;letter-spacing:0.061px;left:1089.3px;">19.03.2019 21:57:07</div>
<div class="t" style="top:868px;font-size:11px;line-height:12px;color:#0c0c0c;letter-spacing:0.061px;left:1199.3px;">19.03.2019 21:57:35</div>
<div class="t" style="top:868px;font-size:11px;line-height:12px;color:#0c0c0c;left:761px;width:600px;text-align:right;">0.00</div>
<div class="t" style="top:868px;font-size:11px;line-height:12px;color:#0c0c0c;left:828px;width:600px;text-align:right;">334624235</div>
<div class="t" style="top:868px;font-size:11px;line-height:12px;color:#0c0c0c;left:868px;width:600px;text-align:right;">2</div>
<div class="t" style="top:868px;font-size:11px;line-height:12px;color:#0c0c0c;letter-spacing:0.072px;left:1475px;">19.03.2019 18:57:35</div>
<div style="left:319px;top:905px;width:1262px;height:1px;background:#c9cbdf;"></div>
<div style="left:325px;top:889px;width:11px;height:11px;border:1px solid #c6c9dc;background:#fff;"></div>
<svg style="left:325px;top:889px;" width="13" height="13" viewBox="0 0 13 13"><path d="M2.4,6.7 L4.9,9.7 L10.5,2.7" fill="none" stroke="#6a6a6a" stroke-width="1.6"/></svg>
<div class="t" style="top:889px;font-size:11px;line-height:12px;color:#0c0c0c;left:-219px;width:600px;text-align:right;">7267</div>
<div class="t" style="top:889px;font-size:11px;line-height:12px;color:#0c0c0c;letter-spacing:-0.234px;left:387.6px;">Jira</div>
<div class="t" style="top:889px;font-size:11px;line-height:12px;color:#0c0c0c;letter-spacing:-0.353px;left:451.6px;">dbo</div>
<div class="t" style="top:889px;font-size:11px;line-height:12px;color:#0c0c0c;letter-spacing:-0.110px;left:500.8px;">rundetails</div>
<div class="t" style="top:889px;font-size:11px;line-height:12px;color:#0c0c0c;letter-spacing:-0.269px;left:689.7px;">PK_rundetails</div>
<div class="t" style="top:889px;font-size:11px;line-height:12px;color:#0c0c0c;left:361px;width:600px;text-align:right;">30</div>
<div class="t" style="top:889px;font-size:11px;line-height:12px;color:#0c0c0c;left:402px;width:600px;text-align:right;">80.56</div>
<div class="t" style="top:889px;font-size:11px;line-height:12px;color:#0c0c0c;left:442px;width:600px;text-align:right;">36</div>
<div class="t" style="top:889px;font-size:11px;line-height:12px;color:#3a3a3a;font-style:italic;left:483px;width:600px;text-align:right;">(null)</div>
<div class="t" style="top:889px;font-size:11px;line-height:12px;color:#0c0c0c;letter-spacing:0.061px;left:1089.3px;">19.03.2019 21:57:07</div>
<div class="t" style="top:889px;font-size:11px;line-height:12px;color:#0c0c0c;letter-spacing:0.061px;left:1199.3px;">19.03.2019 21:57:35</div>
<div class="t" style="top:889px;font-size:11px;line-height:12px;color:#0c0c0c;left:761px;width:600px;text-align:right;">0.00</div>
<div class="t" style="top:889px;font-size:11px;line-height:12px;color:#0c0c0c;left:828px;width:600px;text-align:right;">494624805</div>
<div class="t" style="top:889px;font-size:11px;line-height:12px;color:#0c0c0c;left:868px;width:600px;text-align:right;">1</div>
<div class="t" style="top:889px;font-size:11px;line-height:12px;color:#0c0c0c;letter-spacing:0.072px;left:1475px;">19.03.2019 18:57:35</div>
<div style="left:319px;top:926px;width:1262px;height:1px;background:#c9cbdf;"></div>
<div style="left:325px;top:910px;width:11px;height:11px;border:1px solid #c6c9dc;background:#fff;"></div>
<svg style="left:325px;top:910px;" width="13" height="13" viewBox="0 0 13 13"><path d="M2.4,6.7 L4.9,9.7 L10.5,2.7" fill="none" stroke="#6a6a6a" stroke-width="1.6"/></svg>
<div class="t" style="top:910px;font-size:11px;line-height:12px;color:#0c0c0c;left:-219px;width:600px;text-align:right;">7268</div>
<div class="t" style="top:910px;font-size:11px;line-height:12px;color:#0c0c0c;letter-spacing:-0.234px;left:387.6px;">Jira</div>
<div class="t" style="top:910px;font-size:11px;line-height:12px;color:#0c0c0c;letter-spacing:-0.353px;left:451.6px;">dbo</div>
<div class="t" style="top:910px;font-size:11px;line-height:12px;color:#0c0c0c;letter-spacing:-0.110px;left:500.8px;">rundetails</div>
<div class="t" style="top:910px;font-size:11px;line-height:12px;color:#0c0c0c;letter-spacing:-0.082px;left:689.7px;">rundetails_jobid_idx</div>
<div class="t" style="top:910px;font-size:11px;line-height:12px;color:#0c0c0c;left:361px;width:600px;text-align:right;">24</div>
<div class="t" style="top:910px;font-size:11px;line-height:12px;color:#0c0c0c;left:402px;width:600px;text-align:right;">15.22</div>
<div class="t" style="top:910px;font-size:11px;line-height:12px;color:#0c0c0c;left:442px;width:600px;text-align:right;">92</div>
<div class="t" style="top:910px;font-size:11px;line-height:12px;color:#3a3a3a;font-style:italic;left:483px;width:600px;text-align:right;">(null)</div>
<div class="t" style="top:910px;font-size:11px;line-height:12px;color:#0c0c0c;letter-spacing:0.061px;left:1089.3px;">19.03.2019 21:57:07</div>
<div class="t" style="top:910px;font-size:11px;line-height:12px;color:#0c0c0c;letter-spacing:0.061px;left:1199.3px;">19.03.2019 21:57:35</div>
<div class="t" style="top:910px;font-size:11px;line-height:12px;color:#0c0c0c;left:761px;width:600px;text-align:right;">15.22</div>
<div class="t" style="top:910px;font-size:11px;line-height:12px;color:#0c0c0c;left:828px;width:600px;text-align:right;">494624805</div>
<div class="t" style="top:910px;font-size:11px;line-height:12px;color:#0c0c0c;left:868px;width:600px;text-align:right;">2</div>
<div class="t" style="top:910px;font-size:11px;line-height:12px;color:#0c0c0c;letter-spacing:0.072px;left:1475px;">19.03.2019 18:57:35</div>
<div style="left:318px;top:518px;width:1px;height:409px;background:#c9cbdf;"></div>
<div style="left:343px;top:518px;width:1px;height:409px;background:#c9cbdf;"></div>
<div style="left:383px;top:518px;width:1px;height:409px;background:#c9cbdf;"></div>
<div style="left:448px;top:518px;width:1px;height:409px;background:#c9cbdf;"></div>
<div style="left:497px;top:518px;width:1px;height:409px;background:#c9cbdf;"></div>
<div style="left:686px;top:518px;width:1px;height:409px;background:#c9cbdf;"></div>
<div style="left:909px;top:518px;width:1px;height:409px;background:#c9cbdf;"></div>
<div style="left:963px;top:518px;width:1px;height:409px;background:#c9cbdf;"></div>
<div style="left:1004px;top:518px;width:1px;height:409px;background:#c9cbdf;"></div>
<div style="left:1044px;top:518px;width:1px;height:409px;background:#c9cbdf;"></div>
<div style="left:1085px;top:518px;width:1px;height:409px;background:#c9cbdf;"></div>
<div style="left:1195px;top:518px;width:1px;height:409px;background:#c9cbdf;"></div>
<div style="left:1305px;top:518px;width:1px;height:409px;background:#c9cbdf;"></div>
<div style="left:1363px;top:518px;width:1px;height:409px;background:#c9cbdf;"></div>
<div style="left:1430px;top:518px;width:1px;height:409px;background:#c9cbdf;"></div>
<div style="left:1470px;top:518px;width:1px;height:409px;background:#c9cbdf;"></div>
<div style="left:1580px;top:518px;width:1px;height:409px;background:#c9cbdf;"></div>
<div style="left:384px;top:518px;width:1px;height:409px;background:#c9cbdf;"></div>
<svg style="left:308px;top:556px;" width="4" height="8" viewBox="0 0 4 8"><path d="M0,0 L4,4 L0,8 z" fill="#555"/></svg>
<div style="left:1897px;top:518px;width:16px;height:409px;background:#e4e4e6;"></div>
<svg style="left:1901px;top:524px;" width="9" height="5" viewBox="0 0 9 5"><path d="M0,5 h9 l-4.5,-5 z" fill="#a8a8ae"/></svg>
<div style="left:1901px;top:535px;width:9px;height:14px;background:#c2c3c9;"></div>
<svg style="left:1901px;top:917px;" width="9" height="5" viewBox="0 0 9 5"><path d="M0,0 h9 l-4.5,5 z" fill="#a8a8ae"/></svg>
<div style="left:300px;top:927px;width:1613px;height:19px;background:#e4e4e6;"></div>
<div style="left:300px;top:927px;width:178px;height:19px;background:#fcfcfd;"></div>
<div style="left:334px;top:927px;width:111px;height:19px;background:#fff;"></div>
<div style="left:1897px;top:927px;width:16px;height:19px;background:#eeeef2;"></div>
<div style="left:299px;top:946px;width:1615px;height:1px;background:#c9cbdf;"></div>
<svg style="left:304px;top:932px;" width="9" height="9" viewBox="0 0 9 9"><rect x="0" y="0.5" width="1.4" height="8" fill="#a0a0a8"/><path d="M5.2,0.5 v8 l-3.6,-4 z M9,0.5 v8 l-3.6,-4 z" fill="#a0a0a8"/></svg>
<svg style="left:323px;top:933px;" width="4" height="8" viewBox="0 0 4 8"><path d="M4,0 v8 l-4,-4 z" fill="#a0a0a8"/></svg>
<div class="t" style="top:931px;font-size:11px;line-height:12px;color:#0c0c0c;letter-spacing:-0.106px;left:348.3px;">Record 1 of 3966</div>
<svg style="left:451px;top:933px;" width="4" height="8" viewBox="0 0 4 8"><path d="M0,0 v8 l4,-4 z" fill="#767676"/></svg>
<svg style="left:465px;top:932px;" width="10" height="9" viewBox="0 0 10 9"><path d="M0,0.5 v8 l3.6,-4 z M3.8,0.5 v8 l3.6,-4 z" fill="#767676"/><rect x="7.8" y="0.5" width="1.4" height="8" fill="#767676"/></svg>
<svg style="left:483px;top:932px;" width="5" height="9" viewBox="0 0 5 9"><path d="M5,0 v9 l-5,-4.5 z" fill="#8a8a90"/></svg>
<svg style="left:1886px;top:932px;" width="5" height="9" viewBox="0 0 5 9"><path d="M0,0 v9 l5,-4.5 z" fill="#8a8a90"/></svg>
</body></html>
